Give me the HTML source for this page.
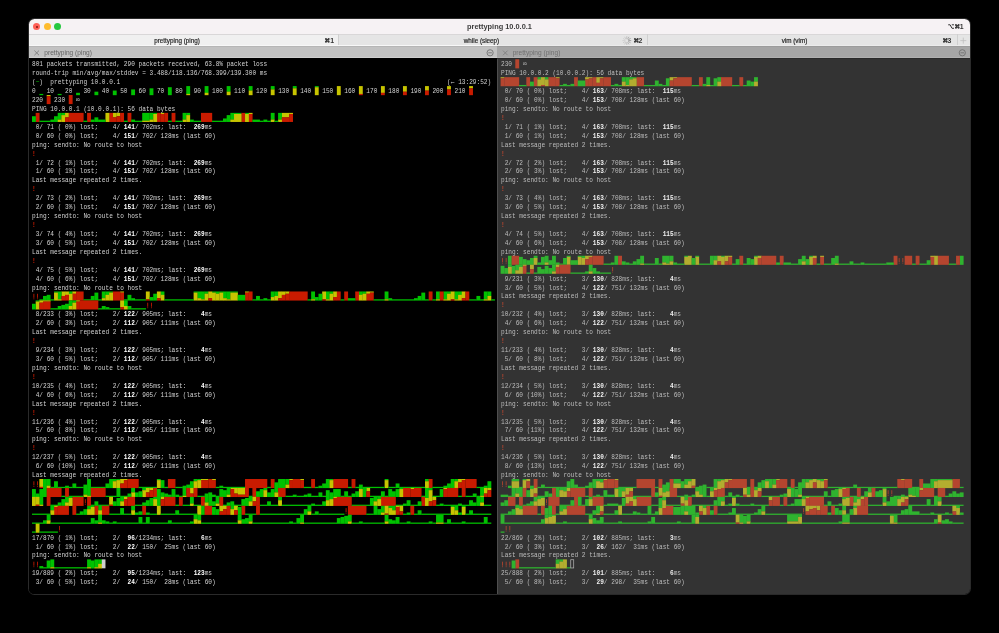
<!DOCTYPE html>
<html><head><meta charset="utf-8"><style>
html,body{margin:0;padding:0;background:#000;}
body{width:999px;height:633px;overflow:hidden;position:relative;}
#win{position:absolute;left:29px;top:19px;width:941px;height:575px;border-radius:5px;overflow:hidden;background:#000;box-shadow:0 0 0 0.6px #4a4a4a;}
.abs{position:absolute;}
.ui{font-family:"Liberation Sans",sans-serif;}
.term{position:absolute;top:0;font-family:"Liberation Mono",monospace;font-size:7px;line-height:8.93px;white-space:pre;will-change:transform;}
.ln{position:absolute;left:0;height:8.93px;transform:scale(0.87452,1.1);transform-origin:0 0;}
.L{color:#d2d2d2;}
.R{color:#bcbcbc;}
.L .b{color:#fff;font-weight:bold;}
.R .b{color:#f0f0f0;font-weight:bold;}
.L .r{color:#c91b00;font-weight:bold;}
.R .r{color:#b5452f;font-weight:bold;}
.L .g{color:#00c200;}
.R .g{color:#2fb32f;}
</style></head><body>
<div id="wrap" style="position:absolute;left:0;top:0;width:999px;height:633px;will-change:transform"><div class="abs" style="left:29px;top:19px;width:941px;height:575px;border-radius:5.5px;background:#000;box-shadow:0 0 0 1px #2a2a2a"></div><div class="abs" style="left:29px;top:58px;width:468px;height:536px;background:#000;border-radius:0 0 0 5px"></div><div class="abs" style="left:497px;top:58px;width:473px;height:536px;background:#333333;border-radius:0 0 5px 0"></div><div class="abs" style="left:496.6px;top:46.2px;width:1.4px;height:547.8px;background:#4e4e4e"></div><div class="abs" style="left:29px;top:19px;width:941px;height:15px;background:#f6f2f4;border-radius:5.5px 5.5px 0 0"></div><div class="abs ui" style="left:29px;top:23.0px;width:941px;text-align:center;font-size:7.4px;line-height:8px;font-weight:bold;color:#3c3c3c">prettyping 10.0.0.1</div><div class="abs" style="left:33.10px;top:23.3px;width:7px;height:7px;border-radius:50%;background:#fe5f57"></div><div class="abs" style="left:43.70px;top:23.3px;width:7px;height:7px;border-radius:50%;background:#febc2e"></div><div class="abs" style="left:54.20px;top:23.3px;width:7px;height:7px;border-radius:50%;background:#28c840"></div><div class="abs" style="left:35.6px;top:25.9px;width:2px;height:2px;border-radius:50%;background:#7a120c"></div><div class="abs" style="left:29px;top:33.8px;width:941px;height:12.4px;background:#e5e5e5"></div><div class="abs" style="left:29px;top:33.8px;width:941px;height:0.8px;background:#d9d7d8"></div><div class="abs" style="left:29px;top:34.6px;width:309px;height:11.6px;background:#f0f0f0"></div><div class="abs" style="left:337.6px;top:34.4px;width:0.9px;height:11.8px;background:#d0d0d0"></div><div class="abs" style="left:647.0px;top:34.4px;width:0.9px;height:11.8px;background:#d0d0d0"></div><div class="abs" style="left:957.2px;top:34.4px;width:0.9px;height:11.8px;background:#d0d0d0"></div><div class="abs ui" style="left:29px;top:37.3px;width:296px;text-align:center;font-size:6.3px;line-height:7px;color:#262626;-webkit-text-stroke:0.18px #262626">prettyping (ping)</div><div class="abs ui" style="left:338px;top:37.3px;width:287px;text-align:center;font-size:6.3px;line-height:7px;color:#262626;-webkit-text-stroke:0.18px #262626">while (sleep)</div><div class="abs ui" style="left:647px;top:37.3px;width:295px;text-align:center;font-size:6.3px;line-height:7px;color:#262626;-webkit-text-stroke:0.18px #262626">vim (vim)</div><svg class="abs" style="left:325.20px;top:38.40px;overflow:visible" width="4.60" height="4.60" viewBox="0 0 10 10"><path d="M3.2 3.2H6.8V6.8H3.2Z M3.2 3.2V2.1A1.1 1.1 0 1 0 2.1 3.2H3.2 M6.8 3.2V2.1A1.1 1.1 0 1 1 7.9 3.2H6.8 M6.8 6.8H7.9A1.1 1.1 0 1 1 6.8 7.9V6.8 M3.2 6.8V7.9A1.1 1.1 0 1 1 2.1 6.8H3.2" fill="none" stroke="#3a3a3a" stroke-width="2.3"/></svg><div class="abs ui" style="left:330.20px;top:37.50px;font-size:6.9px;line-height:6px;font-weight:bold;color:#333">1</div><svg class="abs" style="left:633.60px;top:38.40px;overflow:visible" width="4.60" height="4.60" viewBox="0 0 10 10"><path d="M3.2 3.2H6.8V6.8H3.2Z M3.2 3.2V2.1A1.1 1.1 0 1 0 2.1 3.2H3.2 M6.8 3.2V2.1A1.1 1.1 0 1 1 7.9 3.2H6.8 M6.8 6.8H7.9A1.1 1.1 0 1 1 6.8 7.9V6.8 M3.2 6.8V7.9A1.1 1.1 0 1 1 2.1 6.8H3.2" fill="none" stroke="#3a3a3a" stroke-width="2.3"/></svg><div class="abs ui" style="left:638.60px;top:37.50px;font-size:6.9px;line-height:6px;font-weight:bold;color:#333">2</div><svg class="abs" style="left:942.60px;top:38.40px;overflow:visible" width="4.60" height="4.60" viewBox="0 0 10 10"><path d="M3.2 3.2H6.8V6.8H3.2Z M3.2 3.2V2.1A1.1 1.1 0 1 0 2.1 3.2H3.2 M6.8 3.2V2.1A1.1 1.1 0 1 1 7.9 3.2H6.8 M6.8 6.8H7.9A1.1 1.1 0 1 1 6.8 7.9V6.8 M3.2 6.8V7.9A1.1 1.1 0 1 1 2.1 6.8H3.2" fill="none" stroke="#3a3a3a" stroke-width="2.3"/></svg><div class="abs ui" style="left:947.60px;top:37.50px;font-size:6.9px;line-height:6px;font-weight:bold;color:#333">3</div><svg class="abs" style="left:947.80px;top:23.90px;overflow:visible" width="6.2" height="5" viewBox="0 0 12.4 10"><path d="M0.4 1.6H4.2L8 8.6H12 M7.6 1.6H12" fill="none" stroke="#333" stroke-width="2.0"/></svg><svg class="abs" style="left:954.80px;top:23.90px;overflow:visible" width="4.60" height="4.60" viewBox="0 0 10 10"><path d="M3.2 3.2H6.8V6.8H3.2Z M3.2 3.2V2.1A1.1 1.1 0 1 0 2.1 3.2H3.2 M6.8 3.2V2.1A1.1 1.1 0 1 1 7.9 3.2H6.8 M6.8 6.8H7.9A1.1 1.1 0 1 1 6.8 7.9V6.8 M3.2 6.8V7.9A1.1 1.1 0 1 1 2.1 6.8H3.2" fill="none" stroke="#3a3a3a" stroke-width="2.3"/></svg><div class="abs ui" style="left:959.80px;top:24.00px;font-size:6.9px;line-height:6px;font-weight:bold;color:#333">1</div><svg class="abs" style="left:0;top:0" width="999" height="633"><line x1="628.70" y1="40.60" x2="630.80" y2="40.60" stroke="#9a9a9a" stroke-width="0.9" stroke-linecap="round"/><line x1="628.45" y1="41.55" x2="630.26" y2="42.60" stroke="#a8a8a8" stroke-width="0.9" stroke-linecap="round"/><line x1="627.75" y1="42.25" x2="628.80" y2="44.06" stroke="#b4b4b4" stroke-width="0.9" stroke-linecap="round"/><line x1="626.80" y1="42.50" x2="626.80" y2="44.60" stroke="#c0c0c0" stroke-width="0.9" stroke-linecap="round"/><line x1="625.85" y1="42.25" x2="624.80" y2="44.06" stroke="#c8c8c8" stroke-width="0.9" stroke-linecap="round"/><line x1="625.15" y1="41.55" x2="623.34" y2="42.60" stroke="#cccccc" stroke-width="0.9" stroke-linecap="round"/><line x1="624.90" y1="40.60" x2="622.80" y2="40.60" stroke="#d0d0d0" stroke-width="0.9" stroke-linecap="round"/><line x1="625.15" y1="39.65" x2="623.34" y2="38.60" stroke="#d0d0d0" stroke-width="0.9" stroke-linecap="round"/><line x1="625.85" y1="38.95" x2="624.80" y2="37.14" stroke="#c8c8c8" stroke-width="0.9" stroke-linecap="round"/><line x1="626.80" y1="38.70" x2="626.80" y2="36.60" stroke="#bcbcbc" stroke-width="0.9" stroke-linecap="round"/><line x1="627.75" y1="38.95" x2="628.80" y2="37.14" stroke="#acacac" stroke-width="0.9" stroke-linecap="round"/><line x1="628.45" y1="39.65" x2="630.26" y2="38.60" stroke="#9c9c9c" stroke-width="0.9" stroke-linecap="round"/><path d="M963.3 37.6V43.6 M960.3 40.6H966.3" stroke="#bdbdbd" stroke-width="0.7"/></svg><div class="abs" style="left:29px;top:45.3px;width:468px;height:0.8px;background:#f8f8f8"></div><div class="abs" style="left:497px;top:45.3px;width:473px;height:0.8px;background:#ececec"></div><div class="abs" style="left:29px;top:46.1px;width:468px;height:11.9px;background:#c2c2c2"></div><div class="abs" style="left:497px;top:46.1px;width:473px;height:11.9px;background:#a6a6a6"></div><div class="abs" style="left:29px;top:46.3px;width:468px;height:0.9px;background:#b6b6b6"></div><div class="abs" style="left:497px;top:46.3px;width:473px;height:0.9px;background:#9c9c9c"></div><div class="abs" style="left:29px;top:56.8px;width:468px;height:1.1px;background:#cfcfcf"></div><div class="abs" style="left:497px;top:56.8px;width:473px;height:1.1px;background:#b0b0b0"></div><div class="abs" style="left:497px;top:58px;width:473px;height:0.9px;background:#2a2a2a"></div><div class="abs ui" style="left:44.3px;top:49.2px;font-size:6.6px;line-height:7px;color:#646464">prettyping (ping)</div><div class="abs ui" style="left:512.7px;top:49.2px;font-size:6.6px;line-height:7px;color:#707070">prettyping (ping)</div><svg class="abs" style="left:0;top:0" width="999" height="633"><path d="M34.4 50.6L39 55.2M39 50.6L34.4 55.2" stroke="#707070" stroke-width="0.75"/><path d="M503 50.6L507.6 55.2M507.6 50.6L503 55.2" stroke="#787878" stroke-width="0.75"/><circle cx="490.1" cy="52.8" r="3.1" fill="none" stroke="#6e6e6e" stroke-width="0.85"/><path d="M488.3 52.8H491.9" stroke="#6e6e6e" stroke-width="0.85"/><circle cx="962.3" cy="52.8" r="3.1" fill="none" stroke="#6e6e6e" stroke-width="0.85"/><path d="M960.5 52.8H964.1" stroke="#6e6e6e" stroke-width="0.85"/></svg><div class="term L" style="left:32.00px"><div class="ln" style="top:59.30px">801 packets transmitted, 290 packets received, 63.8% packet loss</div><div class="ln" style="top:68.23px">round-trip min/avg/max/stddev = 3.488/118.136/768.399/139.300 ms</div><div class="ln" style="top:77.16px">(<span class="g">~</span>)  prettyping 10.0.0.1                                                                                         (← 13:29:52)</div><div class="ln" style="top:86.09px">0   10   20   30   40   50   60   70   80   90   100   110   120   130   140   150   160   170   180   190   200   210</div><div class="ln" style="top:95.02px">220   230   ∞</div><div class="ln" style="top:103.95px">PING 10.0.0.1 (10.0.0.1): 56 data bytes</div><div class="ln" style="top:121.81px"> 0/ 71 ( 0%) lost;    4/ <span class="b">141</span>/ 702ms; last:  <span class="b">269</span>ms</div><div class="ln" style="top:130.74px"> 0/ 60 ( 0%) lost;    4/ <span class="b">151</span>/ 702/ 128ms (last 60)</div><div class="ln" style="top:139.67px">ping: sendto: No route to host</div><div class="ln" style="top:148.60px"><span class="r">!</span></div><div class="ln" style="top:157.53px"> 1/ 72 ( 1%) lost;    4/ <span class="b">141</span>/ 702ms; last:  <span class="b">269</span>ms</div><div class="ln" style="top:166.46px"> 1/ 60 ( 1%) lost;    4/ <span class="b">151</span>/ 702/ 128ms (last 60)</div><div class="ln" style="top:175.39px">Last message repeated 2 times.</div><div class="ln" style="top:184.32px"><span class="r">!</span></div><div class="ln" style="top:193.25px"> 2/ 73 ( 2%) lost;    4/ <span class="b">141</span>/ 702ms; last:  <span class="b">269</span>ms</div><div class="ln" style="top:202.18px"> 2/ 60 ( 3%) lost;    4/ <span class="b">151</span>/ 702/ 128ms (last 60)</div><div class="ln" style="top:211.11px">ping: sendto: No route to host</div><div class="ln" style="top:220.04px"><span class="r">!</span></div><div class="ln" style="top:228.97px"> 3/ 74 ( 4%) lost;    4/ <span class="b">141</span>/ 702ms; last:  <span class="b">269</span>ms</div><div class="ln" style="top:237.90px"> 3/ 60 ( 5%) lost;    4/ <span class="b">151</span>/ 702/ 128ms (last 60)</div><div class="ln" style="top:246.83px">Last message repeated 2 times.</div><div class="ln" style="top:255.76px"><span class="r">!</span></div><div class="ln" style="top:264.69px"> 4/ 75 ( 5%) lost;    4/ <span class="b">141</span>/ 702ms; last:  <span class="b">269</span>ms</div><div class="ln" style="top:273.62px"> 4/ 60 ( 6%) lost;    4/ <span class="b">151</span>/ 702/ 128ms (last 60)</div><div class="ln" style="top:282.55px">ping: sendto: No route to host</div><div class="ln" style="top:309.34px"> 8/233 ( 3%) lost;    2/ <span class="b">122</span>/ 905ms; last:    <span class="b">4</span>ms</div><div class="ln" style="top:318.27px"> 2/ 60 ( 3%) lost;    2/ <span class="b">112</span>/ 905/ 111ms (last 60)</div><div class="ln" style="top:327.20px">Last message repeated 2 times.</div><div class="ln" style="top:336.13px"><span class="r">!</span></div><div class="ln" style="top:345.06px"> 9/234 ( 3%) lost;    2/ <span class="b">122</span>/ 905ms; last:    <span class="b">4</span>ms</div><div class="ln" style="top:353.99px"> 3/ 60 ( 5%) lost;    2/ <span class="b">112</span>/ 905/ 111ms (last 60)</div><div class="ln" style="top:362.92px">ping: sendto: No route to host</div><div class="ln" style="top:371.85px"><span class="r">!</span></div><div class="ln" style="top:380.78px">10/235 ( 4%) lost;    2/ <span class="b">122</span>/ 905ms; last:    <span class="b">4</span>ms</div><div class="ln" style="top:389.71px"> 4/ 60 ( 6%) lost;    2/ <span class="b">112</span>/ 905/ 111ms (last 60)</div><div class="ln" style="top:398.64px">Last message repeated 2 times.</div><div class="ln" style="top:407.57px"><span class="r">!</span></div><div class="ln" style="top:416.50px">11/236 ( 4%) lost;    2/ <span class="b">122</span>/ 905ms; last:    <span class="b">4</span>ms</div><div class="ln" style="top:425.43px"> 5/ 60 ( 8%) lost;    2/ <span class="b">112</span>/ 905/ 111ms (last 60)</div><div class="ln" style="top:434.36px">ping: sendto: No route to host</div><div class="ln" style="top:443.29px"><span class="r">!</span></div><div class="ln" style="top:452.22px">12/237 ( 5%) lost;    2/ <span class="b">122</span>/ 905ms; last:    <span class="b">4</span>ms</div><div class="ln" style="top:461.15px"> 6/ 60 (10%) lost;    2/ <span class="b">112</span>/ 905/ 111ms (last 60)</div><div class="ln" style="top:470.08px">Last message repeated 2 times.</div><div class="ln" style="top:532.59px">17/870 ( 1%) lost;    2/  <span class="b">96</span>/1234ms; last:    <span class="b">6</span>ms</div><div class="ln" style="top:541.52px"> 1/ 60 ( 1%) lost;    2/  <span class="b">22</span>/ 150/  25ms (last 60)</div><div class="ln" style="top:550.45px">ping: sendto: No route to host</div><div class="ln" style="top:568.31px">19/889 ( 2%) lost;    2/  <span class="b">95</span>/1234ms; last:  <span class="b">123</span>ms</div><div class="ln" style="top:577.24px"> 3/ 60 ( 5%) lost;    2/  <span class="b">24</span>/ 150/  28ms (last 60)</div></div><div class="term R" style="left:500.60px"><div class="ln" style="top:59.30px">230   ∞</div><div class="ln" style="top:68.23px">PING 10.0.0.2 (10.0.0.2): 56 data bytes</div><div class="ln" style="top:86.09px"> 0/ 70 ( 0%) lost;    4/ <span class="b">163</span>/ 708ms; last:  <span class="b">115</span>ms</div><div class="ln" style="top:95.02px"> 0/ 60 ( 0%) lost;    4/ <span class="b">153</span>/ 708/ 128ms (last 60)</div><div class="ln" style="top:103.95px">ping: sendto: No route to host</div><div class="ln" style="top:112.88px"><span class="r">!</span></div><div class="ln" style="top:121.81px"> 1/ 71 ( 1%) lost;    4/ <span class="b">163</span>/ 708ms; last:  <span class="b">115</span>ms</div><div class="ln" style="top:130.74px"> 1/ 60 ( 1%) lost;    4/ <span class="b">153</span>/ 708/ 128ms (last 60)</div><div class="ln" style="top:139.67px">Last message repeated 2 times.</div><div class="ln" style="top:148.60px"><span class="r">!</span></div><div class="ln" style="top:157.53px"> 2/ 72 ( 2%) lost;    4/ <span class="b">163</span>/ 708ms; last:  <span class="b">115</span>ms</div><div class="ln" style="top:166.46px"> 2/ 60 ( 3%) lost;    4/ <span class="b">153</span>/ 708/ 128ms (last 60)</div><div class="ln" style="top:175.39px">ping: sendto: No route to host</div><div class="ln" style="top:184.32px"><span class="r">!</span></div><div class="ln" style="top:193.25px"> 3/ 73 ( 4%) lost;    4/ <span class="b">163</span>/ 708ms; last:  <span class="b">115</span>ms</div><div class="ln" style="top:202.18px"> 3/ 60 ( 5%) lost;    4/ <span class="b">153</span>/ 708/ 128ms (last 60)</div><div class="ln" style="top:211.11px">Last message repeated 2 times.</div><div class="ln" style="top:220.04px"><span class="r">!</span></div><div class="ln" style="top:228.97px"> 4/ 74 ( 5%) lost;    4/ <span class="b">163</span>/ 708ms; last:  <span class="b">115</span>ms</div><div class="ln" style="top:237.90px"> 4/ 60 ( 6%) lost;    4/ <span class="b">153</span>/ 708/ 128ms (last 60)</div><div class="ln" style="top:246.83px">ping: sendto: No route to host</div><div class="ln" style="top:273.62px"> 9/231 ( 3%) lost;    3/ <span class="b">130</span>/ 828ms; last:    <span class="b">4</span>ms</div><div class="ln" style="top:282.55px"> 3/ 60 ( 5%) lost;    4/ <span class="b">122</span>/ 751/ 132ms (last 60)</div><div class="ln" style="top:291.48px">Last message repeated 2 times.</div><div class="ln" style="top:300.41px"><span class="r">!</span></div><div class="ln" style="top:309.34px">10/232 ( 4%) lost;    3/ <span class="b">130</span>/ 828ms; last:    <span class="b">4</span>ms</div><div class="ln" style="top:318.27px"> 4/ 60 ( 6%) lost;    4/ <span class="b">122</span>/ 751/ 132ms (last 60)</div><div class="ln" style="top:327.20px">ping: sendto: No route to host</div><div class="ln" style="top:336.13px"><span class="r">!</span></div><div class="ln" style="top:345.06px">11/233 ( 4%) lost;    3/ <span class="b">130</span>/ 828ms; last:    <span class="b">4</span>ms</div><div class="ln" style="top:353.99px"> 5/ 60 ( 8%) lost;    4/ <span class="b">122</span>/ 751/ 132ms (last 60)</div><div class="ln" style="top:362.92px">Last message repeated 2 times.</div><div class="ln" style="top:371.85px"><span class="r">!</span></div><div class="ln" style="top:380.78px">12/234 ( 5%) lost;    3/ <span class="b">130</span>/ 828ms; last:    <span class="b">4</span>ms</div><div class="ln" style="top:389.71px"> 6/ 60 (10%) lost;    4/ <span class="b">122</span>/ 751/ 132ms (last 60)</div><div class="ln" style="top:398.64px">ping: sendto: No route to host</div><div class="ln" style="top:407.57px"><span class="r">!</span></div><div class="ln" style="top:416.50px">13/235 ( 5%) lost;    3/ <span class="b">130</span>/ 828ms; last:    <span class="b">4</span>ms</div><div class="ln" style="top:425.43px"> 7/ 60 (11%) lost;    4/ <span class="b">122</span>/ 751/ 132ms (last 60)</div><div class="ln" style="top:434.36px">Last message repeated 2 times.</div><div class="ln" style="top:443.29px"><span class="r">!</span></div><div class="ln" style="top:452.22px">14/236 ( 5%) lost;    3/ <span class="b">130</span>/ 828ms; last:    <span class="b">4</span>ms</div><div class="ln" style="top:461.15px"> 8/ 60 (13%) lost;    4/ <span class="b">122</span>/ 751/ 132ms (last 60)</div><div class="ln" style="top:470.08px">ping: sendto: No route to host</div><div class="ln" style="top:532.59px">22/869 ( 2%) lost;    2/ <span class="b">102</span>/ 885ms; last:    <span class="b">3</span>ms</div><div class="ln" style="top:541.52px"> 2/ 60 ( 3%) lost;    3/  <span class="b">26</span>/ 162/  31ms (last 60)</div><div class="ln" style="top:550.45px">Last message repeated 2 times.</div><div class="ln" style="top:568.31px">25/888 ( 2%) lost;    2/ <span class="b">101</span>/ 885ms; last:    <span class="b">6</span>ms</div><div class="ln" style="top:577.24px"> 5/ 60 ( 8%) lost;    3/  <span class="b">29</span>/ 298/  35ms (last 60)</div></div><svg class="abs" style="left:0;top:0" width="999" height="633"><rect x="314.82" y="86.09" width="3.87" height="1.27" fill="#00c200"/><rect x="292.78" y="86.09" width="3.87" height="2.38" fill="#00c200"/><rect x="469.09" y="86.09" width="3.87" height="2.38" fill="#c7c400"/><rect x="270.75" y="86.09" width="3.87" height="3.50" fill="#00c200"/><rect x="447.05" y="86.09" width="3.87" height="3.50" fill="#c7c400"/><rect x="248.71" y="86.09" width="3.87" height="4.62" fill="#00c200"/><rect x="425.01" y="86.09" width="3.87" height="4.62" fill="#c7c400"/><rect x="226.67" y="86.09" width="3.87" height="5.73" fill="#00c200"/><rect x="402.97" y="86.09" width="3.87" height="5.73" fill="#c7c400"/><rect x="204.63" y="86.09" width="3.87" height="6.85" fill="#00c200"/><rect x="380.94" y="86.09" width="3.87" height="6.85" fill="#c7c400"/><rect x="186.27" y="86.09" width="3.87" height="7.96" fill="#00c200"/><rect x="358.90" y="86.09" width="3.87" height="7.96" fill="#c7c400"/><rect x="336.86" y="86.09" width="3.87" height="9.08" fill="#c7c400"/><rect x="167.90" y="87.21" width="3.87" height="7.96" fill="#00c200"/><rect x="314.82" y="87.21" width="3.87" height="7.96" fill="#c7c400"/><rect x="149.54" y="88.32" width="3.87" height="6.85" fill="#00c200"/><rect x="469.09" y="88.32" width="3.87" height="6.85" fill="#c91b00"/><rect x="292.78" y="88.32" width="3.87" height="6.85" fill="#c7c400"/><rect x="131.17" y="89.44" width="3.87" height="5.73" fill="#00c200"/><rect x="447.05" y="89.44" width="3.87" height="5.73" fill="#c91b00"/><rect x="270.75" y="89.44" width="3.87" height="5.73" fill="#c7c400"/><rect x="112.81" y="90.56" width="3.87" height="4.62" fill="#00c200"/><rect x="425.01" y="90.56" width="3.87" height="4.62" fill="#c91b00"/><rect x="248.71" y="90.56" width="3.87" height="4.62" fill="#c7c400"/><rect x="94.44" y="91.67" width="3.87" height="3.50" fill="#00c200"/><rect x="402.97" y="91.67" width="3.87" height="3.50" fill="#c91b00"/><rect x="226.67" y="91.67" width="3.87" height="3.50" fill="#c7c400"/><rect x="76.08" y="92.79" width="3.87" height="2.38" fill="#00c200"/><rect x="380.94" y="92.79" width="3.87" height="2.38" fill="#c91b00"/><rect x="204.63" y="92.79" width="3.87" height="2.38" fill="#c7c400"/><rect x="39.35" y="93.90" width="3.87" height="1.27" fill="#00c200"/><rect x="57.71" y="93.90" width="3.87" height="1.27" fill="#00c200"/><rect x="358.90" y="93.90" width="3.87" height="1.27" fill="#c91b00"/><rect x="186.27" y="93.90" width="3.87" height="1.27" fill="#c7c400"/><rect x="46.69" y="95.02" width="3.87" height="1.27" fill="#c7c400"/><rect x="68.73" y="95.02" width="3.87" height="9.08" fill="#c91b00"/><rect x="46.69" y="96.14" width="3.87" height="7.96" fill="#c91b00"/><rect x="153.21" y="112.88" width="3.87" height="1.27" fill="#00c200"/><rect x="234.02" y="112.88" width="7.55" height="1.27" fill="#00c200"/><rect x="245.03" y="112.88" width="3.87" height="1.27" fill="#00c200"/><rect x="160.56" y="112.88" width="3.87" height="1.27" fill="#c7c400"/><rect x="248.71" y="112.88" width="3.87" height="1.27" fill="#c7c400"/><rect x="289.11" y="112.88" width="3.87" height="1.27" fill="#c7c400"/><rect x="61.38" y="112.88" width="3.87" height="2.38" fill="#00c200"/><rect x="186.27" y="112.88" width="3.87" height="2.38" fill="#00c200"/><rect x="116.48" y="112.88" width="3.87" height="3.50" fill="#c7c400"/><rect x="65.06" y="112.88" width="3.87" height="4.62" fill="#c7c400"/><rect x="112.81" y="112.88" width="3.87" height="4.62" fill="#c7c400"/><rect x="281.76" y="112.88" width="7.55" height="4.62" fill="#c7c400"/><rect x="57.71" y="112.88" width="3.87" height="6.85" fill="#00c200"/><rect x="149.54" y="112.88" width="3.87" height="6.85" fill="#00c200"/><rect x="182.59" y="112.88" width="3.87" height="6.85" fill="#00c200"/><rect x="230.34" y="112.88" width="3.87" height="6.85" fill="#00c200"/><rect x="270.75" y="112.88" width="3.87" height="6.85" fill="#00c200"/><rect x="278.09" y="112.88" width="3.87" height="6.85" fill="#00c200"/><rect x="142.19" y="112.88" width="7.55" height="7.96" fill="#00c200"/><rect x="35.67" y="112.88" width="3.87" height="9.08" fill="#c91b00"/><rect x="68.73" y="112.88" width="14.89" height="9.08" fill="#c91b00"/><rect x="87.09" y="112.88" width="3.87" height="9.08" fill="#c91b00"/><rect x="109.13" y="112.88" width="3.87" height="9.08" fill="#c91b00"/><rect x="120.15" y="112.88" width="3.87" height="9.08" fill="#c91b00"/><rect x="127.50" y="112.88" width="3.87" height="9.08" fill="#c91b00"/><rect x="156.88" y="112.88" width="3.87" height="9.08" fill="#c91b00"/><rect x="164.23" y="112.88" width="3.87" height="9.08" fill="#c91b00"/><rect x="171.57" y="112.88" width="3.87" height="9.08" fill="#c91b00"/><rect x="200.96" y="112.88" width="11.22" height="9.08" fill="#c91b00"/><rect x="241.36" y="112.88" width="3.87" height="9.08" fill="#c91b00"/><rect x="105.46" y="112.88" width="3.87" height="9.08" fill="#c7c400"/><rect x="160.56" y="114.00" width="3.87" height="7.96" fill="#c91b00"/><rect x="248.71" y="114.00" width="3.87" height="7.96" fill="#c91b00"/><rect x="289.11" y="114.00" width="3.87" height="7.96" fill="#c91b00"/><rect x="153.21" y="114.00" width="3.87" height="7.96" fill="#c7c400"/><rect x="234.02" y="114.00" width="7.55" height="7.96" fill="#c7c400"/><rect x="245.03" y="114.00" width="3.87" height="7.96" fill="#c7c400"/><rect x="226.67" y="115.11" width="3.87" height="6.85" fill="#00c200"/><rect x="61.38" y="115.11" width="3.87" height="6.85" fill="#c7c400"/><rect x="186.27" y="115.11" width="3.87" height="6.85" fill="#c7c400"/><rect x="32.00" y="116.23" width="3.87" height="5.73" fill="#00c200"/><rect x="54.04" y="116.23" width="3.87" height="5.73" fill="#00c200"/><rect x="116.48" y="116.23" width="3.87" height="5.73" fill="#c91b00"/><rect x="94.44" y="117.34" width="3.87" height="4.62" fill="#00c200"/><rect x="65.06" y="117.34" width="3.87" height="4.62" fill="#c91b00"/><rect x="112.81" y="117.34" width="3.87" height="4.62" fill="#c91b00"/><rect x="281.76" y="117.34" width="7.55" height="4.62" fill="#c91b00"/><rect x="223.00" y="118.46" width="3.87" height="3.50" fill="#00c200"/><rect x="50.37" y="119.58" width="3.87" height="2.38" fill="#00c200"/><rect x="90.77" y="119.58" width="3.87" height="2.38" fill="#00c200"/><rect x="98.11" y="119.58" width="7.55" height="2.38" fill="#00c200"/><rect x="131.17" y="119.58" width="3.87" height="2.38" fill="#00c200"/><rect x="189.94" y="119.58" width="3.87" height="2.38" fill="#00c200"/><rect x="252.38" y="119.58" width="7.55" height="2.38" fill="#00c200"/><rect x="263.40" y="119.58" width="3.87" height="2.38" fill="#00c200"/><rect x="57.71" y="119.58" width="3.87" height="2.38" fill="#c7c400"/><rect x="149.54" y="119.58" width="3.87" height="2.38" fill="#c7c400"/><rect x="182.59" y="119.58" width="3.87" height="2.38" fill="#c7c400"/><rect x="230.34" y="119.58" width="3.87" height="2.38" fill="#c7c400"/><rect x="270.75" y="119.58" width="3.87" height="2.38" fill="#c7c400"/><rect x="278.09" y="119.58" width="3.87" height="2.38" fill="#c7c400"/><rect x="39.35" y="120.69" width="11.22" height="1.27" fill="#00c200"/><rect x="83.42" y="120.69" width="3.87" height="1.27" fill="#00c200"/><rect x="123.83" y="120.69" width="3.87" height="1.27" fill="#00c200"/><rect x="134.84" y="120.69" width="7.55" height="1.27" fill="#00c200"/><rect x="167.90" y="120.69" width="3.87" height="1.27" fill="#00c200"/><rect x="175.25" y="120.69" width="7.55" height="1.27" fill="#00c200"/><rect x="193.61" y="120.69" width="7.55" height="1.27" fill="#00c200"/><rect x="211.98" y="120.69" width="11.22" height="1.27" fill="#00c200"/><rect x="259.73" y="120.69" width="3.87" height="1.27" fill="#00c200"/><rect x="267.07" y="120.69" width="3.87" height="1.27" fill="#00c200"/><rect x="274.42" y="120.69" width="3.87" height="1.27" fill="#00c200"/><rect x="142.19" y="120.69" width="7.55" height="1.27" fill="#c7c400"/><rect x="54.04" y="291.48" width="3.87" height="1.27" fill="#00c200"/><rect x="109.13" y="291.48" width="3.87" height="1.27" fill="#00c200"/><rect x="193.61" y="291.48" width="3.87" height="1.27" fill="#00c200"/><rect x="211.98" y="291.48" width="3.87" height="1.27" fill="#00c200"/><rect x="219.32" y="291.48" width="3.87" height="1.27" fill="#00c200"/><rect x="230.34" y="291.48" width="7.55" height="1.27" fill="#00c200"/><rect x="120.15" y="291.48" width="3.87" height="1.27" fill="#c7c400"/><rect x="245.03" y="291.48" width="3.87" height="1.27" fill="#c7c400"/><rect x="369.92" y="291.48" width="3.87" height="1.27" fill="#c7c400"/><rect x="68.73" y="291.48" width="3.87" height="2.38" fill="#00c200"/><rect x="204.63" y="291.48" width="3.87" height="2.38" fill="#00c200"/><rect x="215.65" y="291.48" width="3.87" height="2.38" fill="#00c200"/><rect x="329.51" y="291.48" width="3.87" height="2.38" fill="#00c200"/><rect x="362.57" y="291.48" width="3.87" height="2.38" fill="#00c200"/><rect x="447.05" y="291.48" width="3.87" height="2.38" fill="#00c200"/><rect x="72.40" y="291.48" width="3.87" height="2.38" fill="#c7c400"/><rect x="285.44" y="291.48" width="3.87" height="2.38" fill="#c7c400"/><rect x="366.24" y="291.48" width="3.87" height="2.38" fill="#c7c400"/><rect x="105.46" y="291.48" width="3.87" height="3.50" fill="#00c200"/><rect x="160.56" y="291.48" width="3.87" height="3.50" fill="#00c200"/><rect x="358.90" y="291.48" width="3.87" height="3.50" fill="#00c200"/><rect x="458.07" y="291.48" width="3.87" height="3.50" fill="#00c200"/><rect x="65.06" y="291.48" width="3.87" height="3.50" fill="#c7c400"/><rect x="281.76" y="291.48" width="3.87" height="3.50" fill="#c7c400"/><rect x="274.42" y="291.48" width="3.87" height="4.62" fill="#00c200"/><rect x="487.45" y="291.48" width="3.87" height="4.62" fill="#00c200"/><rect x="61.38" y="291.48" width="3.87" height="4.62" fill="#c7c400"/><rect x="270.75" y="291.48" width="3.87" height="5.73" fill="#00c200"/><rect x="333.19" y="291.48" width="3.87" height="5.73" fill="#c7c400"/><rect x="101.79" y="291.48" width="3.87" height="6.85" fill="#00c200"/><rect x="197.28" y="291.48" width="3.87" height="6.85" fill="#00c200"/><rect x="223.00" y="291.48" width="3.87" height="6.85" fill="#00c200"/><rect x="156.88" y="291.48" width="3.87" height="6.85" fill="#c7c400"/><rect x="208.30" y="291.48" width="3.87" height="6.85" fill="#c7c400"/><rect x="278.09" y="291.48" width="3.87" height="6.85" fill="#c7c400"/><rect x="461.74" y="291.48" width="3.87" height="6.85" fill="#c7c400"/><rect x="57.71" y="291.48" width="3.87" height="7.96" fill="#00c200"/><rect x="200.96" y="291.48" width="3.87" height="7.96" fill="#00c200"/><rect x="226.67" y="291.48" width="3.87" height="7.96" fill="#00c200"/><rect x="311.15" y="291.48" width="3.87" height="7.96" fill="#00c200"/><rect x="325.84" y="291.48" width="3.87" height="7.96" fill="#00c200"/><rect x="384.61" y="291.48" width="3.87" height="7.96" fill="#00c200"/><rect x="436.03" y="291.48" width="3.87" height="7.96" fill="#00c200"/><rect x="443.38" y="291.48" width="3.87" height="7.96" fill="#00c200"/><rect x="454.39" y="291.48" width="3.87" height="7.96" fill="#00c200"/><rect x="483.78" y="291.48" width="3.87" height="7.96" fill="#00c200"/><rect x="145.86" y="291.48" width="3.87" height="7.96" fill="#c7c400"/><rect x="322.17" y="291.48" width="3.87" height="7.96" fill="#c7c400"/><rect x="450.72" y="291.48" width="3.87" height="7.96" fill="#c7c400"/><rect x="76.08" y="291.48" width="7.55" height="9.08" fill="#c91b00"/><rect x="112.81" y="291.48" width="7.55" height="9.08" fill="#c91b00"/><rect x="248.71" y="291.48" width="3.87" height="9.08" fill="#c91b00"/><rect x="289.11" y="291.48" width="18.57" height="9.08" fill="#c91b00"/><rect x="336.86" y="291.48" width="3.87" height="9.08" fill="#c91b00"/><rect x="344.20" y="291.48" width="3.87" height="9.08" fill="#c91b00"/><rect x="355.22" y="291.48" width="3.87" height="9.08" fill="#c91b00"/><rect x="428.68" y="291.48" width="3.87" height="9.08" fill="#c91b00"/><rect x="439.70" y="291.48" width="3.87" height="9.08" fill="#c91b00"/><rect x="465.41" y="291.48" width="3.87" height="9.08" fill="#c91b00"/><rect x="94.44" y="292.60" width="3.87" height="7.96" fill="#00c200"/><rect x="421.34" y="292.60" width="3.87" height="7.96" fill="#00c200"/><rect x="120.15" y="292.60" width="3.87" height="7.96" fill="#c91b00"/><rect x="245.03" y="292.60" width="3.87" height="7.96" fill="#c91b00"/><rect x="369.92" y="292.60" width="3.87" height="7.96" fill="#c91b00"/><rect x="54.04" y="292.60" width="3.87" height="7.96" fill="#c7c400"/><rect x="109.13" y="292.60" width="3.87" height="7.96" fill="#c7c400"/><rect x="193.61" y="292.60" width="3.87" height="7.96" fill="#c7c400"/><rect x="211.98" y="292.60" width="3.87" height="7.96" fill="#c7c400"/><rect x="219.32" y="292.60" width="3.87" height="7.96" fill="#c7c400"/><rect x="230.34" y="292.60" width="7.55" height="7.96" fill="#c7c400"/><rect x="153.21" y="293.71" width="3.87" height="6.85" fill="#00c200"/><rect x="318.49" y="293.71" width="3.87" height="6.85" fill="#00c200"/><rect x="72.40" y="293.71" width="3.87" height="6.85" fill="#c91b00"/><rect x="285.44" y="293.71" width="3.87" height="6.85" fill="#c91b00"/><rect x="366.24" y="293.71" width="3.87" height="6.85" fill="#c91b00"/><rect x="68.73" y="293.71" width="3.87" height="6.85" fill="#c7c400"/><rect x="204.63" y="293.71" width="3.87" height="6.85" fill="#c7c400"/><rect x="215.65" y="293.71" width="3.87" height="6.85" fill="#c7c400"/><rect x="329.51" y="293.71" width="3.87" height="6.85" fill="#c7c400"/><rect x="362.57" y="293.71" width="3.87" height="6.85" fill="#c7c400"/><rect x="447.05" y="293.71" width="3.87" height="6.85" fill="#c7c400"/><rect x="46.69" y="294.83" width="3.87" height="5.73" fill="#00c200"/><rect x="127.50" y="294.83" width="3.87" height="5.73" fill="#00c200"/><rect x="237.69" y="294.83" width="7.55" height="5.73" fill="#00c200"/><rect x="65.06" y="294.83" width="3.87" height="5.73" fill="#c91b00"/><rect x="281.76" y="294.83" width="3.87" height="5.73" fill="#c91b00"/><rect x="105.46" y="294.83" width="3.87" height="5.73" fill="#c7c400"/><rect x="160.56" y="294.83" width="3.87" height="5.73" fill="#c7c400"/><rect x="358.90" y="294.83" width="3.87" height="5.73" fill="#c7c400"/><rect x="458.07" y="294.83" width="3.87" height="5.73" fill="#c7c400"/><rect x="43.02" y="295.94" width="3.87" height="4.62" fill="#00c200"/><rect x="90.77" y="295.94" width="3.87" height="4.62" fill="#00c200"/><rect x="256.05" y="295.94" width="3.87" height="4.62" fill="#00c200"/><rect x="417.67" y="295.94" width="3.87" height="4.62" fill="#00c200"/><rect x="476.43" y="295.94" width="3.87" height="4.62" fill="#00c200"/><rect x="61.38" y="295.94" width="3.87" height="4.62" fill="#c91b00"/><rect x="274.42" y="295.94" width="3.87" height="4.62" fill="#c7c400"/><rect x="487.45" y="295.94" width="3.87" height="4.62" fill="#c7c400"/><rect x="149.54" y="297.06" width="3.87" height="3.50" fill="#00c200"/><rect x="314.82" y="297.06" width="3.87" height="3.50" fill="#00c200"/><rect x="333.19" y="297.06" width="3.87" height="3.50" fill="#c91b00"/><rect x="270.75" y="297.06" width="3.87" height="3.50" fill="#c7c400"/><rect x="131.17" y="298.18" width="3.87" height="2.38" fill="#00c200"/><rect x="263.40" y="298.18" width="3.87" height="2.38" fill="#00c200"/><rect x="347.88" y="298.18" width="7.55" height="2.38" fill="#00c200"/><rect x="388.28" y="298.18" width="3.87" height="2.38" fill="#00c200"/><rect x="413.99" y="298.18" width="3.87" height="2.38" fill="#00c200"/><rect x="156.88" y="298.18" width="3.87" height="2.38" fill="#c91b00"/><rect x="208.30" y="298.18" width="3.87" height="2.38" fill="#c91b00"/><rect x="278.09" y="298.18" width="3.87" height="2.38" fill="#c91b00"/><rect x="461.74" y="298.18" width="3.87" height="2.38" fill="#c91b00"/><rect x="101.79" y="298.18" width="3.87" height="2.38" fill="#c7c400"/><rect x="197.28" y="298.18" width="3.87" height="2.38" fill="#c7c400"/><rect x="223.00" y="298.18" width="3.87" height="2.38" fill="#c7c400"/><rect x="39.35" y="299.29" width="3.87" height="1.27" fill="#00c200"/><rect x="50.37" y="299.29" width="3.87" height="1.27" fill="#00c200"/><rect x="83.42" y="299.29" width="7.55" height="1.27" fill="#00c200"/><rect x="98.11" y="299.29" width="3.87" height="1.27" fill="#00c200"/><rect x="123.83" y="299.29" width="3.87" height="1.27" fill="#00c200"/><rect x="134.84" y="299.29" width="11.22" height="1.27" fill="#00c200"/><rect x="164.23" y="299.29" width="29.58" height="1.27" fill="#00c200"/><rect x="252.38" y="299.29" width="3.87" height="1.27" fill="#00c200"/><rect x="259.73" y="299.29" width="3.87" height="1.27" fill="#00c200"/><rect x="267.07" y="299.29" width="3.87" height="1.27" fill="#00c200"/><rect x="307.48" y="299.29" width="3.87" height="1.27" fill="#00c200"/><rect x="340.53" y="299.29" width="3.87" height="1.27" fill="#00c200"/><rect x="373.59" y="299.29" width="11.22" height="1.27" fill="#00c200"/><rect x="391.95" y="299.29" width="22.24" height="1.27" fill="#00c200"/><rect x="425.01" y="299.29" width="3.87" height="1.27" fill="#00c200"/><rect x="432.36" y="299.29" width="3.87" height="1.27" fill="#00c200"/><rect x="469.09" y="299.29" width="7.55" height="1.27" fill="#00c200"/><rect x="480.11" y="299.29" width="3.87" height="1.27" fill="#00c200"/><rect x="491.12" y="299.29" width="3.87" height="1.27" fill="#00c200"/><rect x="145.86" y="299.29" width="3.87" height="1.27" fill="#c91b00"/><rect x="322.17" y="299.29" width="3.87" height="1.27" fill="#c91b00"/><rect x="450.72" y="299.29" width="3.87" height="1.27" fill="#c91b00"/><rect x="57.71" y="299.29" width="3.87" height="1.27" fill="#c7c400"/><rect x="200.96" y="299.29" width="3.87" height="1.27" fill="#c7c400"/><rect x="226.67" y="299.29" width="3.87" height="1.27" fill="#c7c400"/><rect x="311.15" y="299.29" width="3.87" height="1.27" fill="#c7c400"/><rect x="325.84" y="299.29" width="3.87" height="1.27" fill="#c7c400"/><rect x="384.61" y="299.29" width="3.87" height="1.27" fill="#c7c400"/><rect x="436.03" y="299.29" width="3.87" height="1.27" fill="#c7c400"/><rect x="443.38" y="299.29" width="3.87" height="1.27" fill="#c7c400"/><rect x="454.39" y="299.29" width="3.87" height="1.27" fill="#c7c400"/><rect x="483.78" y="299.29" width="3.87" height="1.27" fill="#c7c400"/><rect x="33.45" y="293.78" width="0.85" height="4.0" fill="#c91b00"/><rect x="33.45" y="298.38" width="0.85" height="0.9" fill="#c91b00"/><rect x="37.12" y="293.78" width="0.85" height="4.0" fill="#c91b00"/><rect x="37.12" y="298.38" width="0.85" height="0.9" fill="#c91b00"/><rect x="35.67" y="300.41" width="3.87" height="1.27" fill="#00c200"/><rect x="43.02" y="300.41" width="7.55" height="1.27" fill="#c7c400"/><rect x="76.08" y="300.41" width="3.87" height="1.27" fill="#c7c400"/><rect x="72.40" y="300.41" width="3.87" height="2.38" fill="#00c200"/><rect x="39.35" y="300.41" width="3.87" height="2.38" fill="#c7c400"/><rect x="68.73" y="300.41" width="3.87" height="5.73" fill="#00c200"/><rect x="123.83" y="300.41" width="3.87" height="5.73" fill="#00c200"/><rect x="120.15" y="300.41" width="3.87" height="6.85" fill="#c7c400"/><rect x="79.75" y="300.41" width="18.57" height="9.08" fill="#c91b00"/><rect x="43.02" y="301.53" width="7.55" height="7.96" fill="#c91b00"/><rect x="76.08" y="301.53" width="3.87" height="7.96" fill="#c91b00"/><rect x="35.67" y="301.53" width="3.87" height="7.96" fill="#c7c400"/><rect x="39.35" y="302.64" width="3.87" height="6.85" fill="#c91b00"/><rect x="72.40" y="302.64" width="3.87" height="6.85" fill="#c7c400"/><rect x="32.00" y="303.76" width="3.87" height="5.73" fill="#00c200"/><rect x="65.06" y="303.76" width="3.87" height="5.73" fill="#00c200"/><rect x="61.38" y="304.87" width="3.87" height="4.62" fill="#00c200"/><rect x="57.71" y="305.99" width="3.87" height="3.50" fill="#00c200"/><rect x="101.79" y="305.99" width="3.87" height="3.50" fill="#00c200"/><rect x="127.50" y="305.99" width="3.87" height="3.50" fill="#00c200"/><rect x="68.73" y="305.99" width="3.87" height="3.50" fill="#c7c400"/><rect x="123.83" y="305.99" width="3.87" height="3.50" fill="#c7c400"/><rect x="105.46" y="307.11" width="3.87" height="2.38" fill="#00c200"/><rect x="120.15" y="307.11" width="3.87" height="2.38" fill="#c91b00"/><rect x="50.37" y="308.22" width="7.55" height="1.27" fill="#00c200"/><rect x="98.11" y="308.22" width="3.87" height="1.27" fill="#00c200"/><rect x="109.13" y="308.22" width="11.22" height="1.27" fill="#00c200"/><rect x="131.17" y="308.22" width="14.89" height="1.27" fill="#00c200"/><rect x="147.31" y="302.71" width="0.85" height="4.0" fill="#c91b00"/><rect x="147.31" y="307.31" width="0.85" height="0.9" fill="#c91b00"/><rect x="150.99" y="302.71" width="0.85" height="4.0" fill="#c91b00"/><rect x="150.99" y="307.31" width="0.85" height="0.9" fill="#c91b00"/><rect x="116.48" y="479.01" width="3.87" height="1.27" fill="#00c200"/><rect x="156.88" y="479.01" width="3.87" height="1.27" fill="#00c200"/><rect x="197.28" y="479.01" width="3.87" height="1.27" fill="#00c200"/><rect x="329.51" y="479.01" width="3.87" height="1.27" fill="#00c200"/><rect x="384.61" y="479.01" width="3.87" height="1.27" fill="#00c200"/><rect x="123.83" y="479.01" width="3.87" height="1.27" fill="#c7c400"/><rect x="200.96" y="479.01" width="7.55" height="1.27" fill="#c7c400"/><rect x="211.98" y="479.01" width="3.87" height="1.27" fill="#c7c400"/><rect x="289.11" y="479.01" width="3.87" height="1.27" fill="#c7c400"/><rect x="300.13" y="479.01" width="3.87" height="1.27" fill="#c7c400"/><rect x="461.74" y="479.01" width="3.87" height="1.27" fill="#c7c400"/><rect x="112.81" y="479.01" width="3.87" height="2.38" fill="#00c200"/><rect x="193.61" y="479.01" width="3.87" height="2.38" fill="#00c200"/><rect x="425.01" y="479.01" width="3.87" height="2.38" fill="#00c200"/><rect x="454.39" y="479.01" width="3.87" height="2.38" fill="#00c200"/><rect x="458.07" y="479.01" width="3.87" height="3.50" fill="#c7c400"/><rect x="120.15" y="479.01" width="3.87" height="4.62" fill="#c7c400"/><rect x="285.44" y="479.01" width="3.87" height="5.73" fill="#00c200"/><rect x="46.69" y="479.01" width="3.87" height="6.85" fill="#00c200"/><rect x="39.35" y="479.01" width="3.87" height="7.96" fill="#c7c400"/><rect x="43.02" y="479.01" width="3.87" height="9.08" fill="#00c200"/><rect x="87.09" y="479.01" width="3.87" height="9.08" fill="#00c200"/><rect x="109.13" y="479.01" width="3.87" height="9.08" fill="#00c200"/><rect x="278.09" y="479.01" width="7.55" height="9.08" fill="#00c200"/><rect x="325.84" y="479.01" width="3.87" height="9.08" fill="#00c200"/><rect x="450.72" y="479.01" width="3.87" height="9.08" fill="#00c200"/><rect x="127.50" y="479.01" width="11.22" height="9.08" fill="#c91b00"/><rect x="167.90" y="479.01" width="7.55" height="9.08" fill="#c91b00"/><rect x="208.30" y="479.01" width="3.87" height="9.08" fill="#c91b00"/><rect x="245.03" y="479.01" width="22.24" height="9.08" fill="#c91b00"/><rect x="270.75" y="479.01" width="3.87" height="9.08" fill="#c91b00"/><rect x="292.78" y="479.01" width="7.55" height="9.08" fill="#c91b00"/><rect x="311.15" y="479.01" width="3.87" height="9.08" fill="#c91b00"/><rect x="333.19" y="479.01" width="14.89" height="9.08" fill="#c91b00"/><rect x="351.55" y="479.01" width="3.87" height="9.08" fill="#c91b00"/><rect x="428.68" y="479.01" width="3.87" height="9.08" fill="#c91b00"/><rect x="465.41" y="479.01" width="11.22" height="9.08" fill="#c91b00"/><rect x="160.56" y="480.13" width="3.87" height="7.96" fill="#00c200"/><rect x="123.83" y="480.13" width="3.87" height="7.96" fill="#c91b00"/><rect x="200.96" y="480.13" width="7.55" height="7.96" fill="#c91b00"/><rect x="211.98" y="480.13" width="3.87" height="7.96" fill="#c91b00"/><rect x="289.11" y="480.13" width="3.87" height="7.96" fill="#c91b00"/><rect x="300.13" y="480.13" width="3.87" height="7.96" fill="#c91b00"/><rect x="461.74" y="480.13" width="3.87" height="7.96" fill="#c91b00"/><rect x="116.48" y="480.13" width="3.87" height="7.96" fill="#c7c400"/><rect x="156.88" y="480.13" width="3.87" height="7.96" fill="#c7c400"/><rect x="197.28" y="480.13" width="3.87" height="7.96" fill="#c7c400"/><rect x="329.51" y="480.13" width="3.87" height="7.96" fill="#c7c400"/><rect x="384.61" y="480.13" width="3.87" height="7.96" fill="#c7c400"/><rect x="54.04" y="481.24" width="3.87" height="6.85" fill="#00c200"/><rect x="189.94" y="481.24" width="3.87" height="6.85" fill="#00c200"/><rect x="487.45" y="481.24" width="3.87" height="6.85" fill="#00c200"/><rect x="112.81" y="481.24" width="3.87" height="6.85" fill="#c7c400"/><rect x="193.61" y="481.24" width="3.87" height="6.85" fill="#c7c400"/><rect x="425.01" y="481.24" width="3.87" height="6.85" fill="#c7c400"/><rect x="454.39" y="481.24" width="3.87" height="6.85" fill="#c7c400"/><rect x="274.42" y="482.36" width="3.87" height="5.73" fill="#00c200"/><rect x="458.07" y="482.36" width="3.87" height="5.73" fill="#c91b00"/><rect x="72.40" y="483.47" width="3.87" height="4.62" fill="#00c200"/><rect x="105.46" y="483.47" width="3.87" height="4.62" fill="#00c200"/><rect x="322.17" y="483.47" width="3.87" height="4.62" fill="#00c200"/><rect x="395.63" y="483.47" width="3.87" height="4.62" fill="#00c200"/><rect x="447.05" y="483.47" width="3.87" height="4.62" fill="#00c200"/><rect x="120.15" y="483.47" width="3.87" height="4.62" fill="#c91b00"/><rect x="83.42" y="484.59" width="3.87" height="3.50" fill="#00c200"/><rect x="186.27" y="484.59" width="3.87" height="3.50" fill="#00c200"/><rect x="358.90" y="484.59" width="3.87" height="3.50" fill="#00c200"/><rect x="285.44" y="484.59" width="3.87" height="3.50" fill="#c7c400"/><rect x="65.06" y="485.71" width="3.87" height="2.38" fill="#00c200"/><rect x="182.59" y="485.71" width="3.87" height="2.38" fill="#00c200"/><rect x="219.32" y="485.71" width="3.87" height="2.38" fill="#00c200"/><rect x="318.49" y="485.71" width="3.87" height="2.38" fill="#00c200"/><rect x="443.38" y="485.71" width="3.87" height="2.38" fill="#00c200"/><rect x="483.78" y="485.71" width="3.87" height="2.38" fill="#00c200"/><rect x="46.69" y="485.71" width="3.87" height="2.38" fill="#c7c400"/><rect x="50.37" y="486.82" width="3.87" height="1.27" fill="#00c200"/><rect x="57.71" y="486.82" width="7.55" height="1.27" fill="#00c200"/><rect x="68.73" y="486.82" width="3.87" height="1.27" fill="#00c200"/><rect x="76.08" y="486.82" width="7.55" height="1.27" fill="#00c200"/><rect x="90.77" y="486.82" width="14.89" height="1.27" fill="#00c200"/><rect x="138.52" y="486.82" width="18.57" height="1.27" fill="#00c200"/><rect x="164.23" y="486.82" width="3.87" height="1.27" fill="#00c200"/><rect x="175.25" y="486.82" width="7.55" height="1.27" fill="#00c200"/><rect x="215.65" y="486.82" width="3.87" height="1.27" fill="#00c200"/><rect x="223.00" y="486.82" width="22.24" height="1.27" fill="#00c200"/><rect x="267.07" y="486.82" width="3.87" height="1.27" fill="#00c200"/><rect x="303.80" y="486.82" width="7.55" height="1.27" fill="#00c200"/><rect x="314.82" y="486.82" width="3.87" height="1.27" fill="#00c200"/><rect x="347.88" y="486.82" width="3.87" height="1.27" fill="#00c200"/><rect x="355.22" y="486.82" width="3.87" height="1.27" fill="#00c200"/><rect x="362.57" y="486.82" width="22.24" height="1.27" fill="#00c200"/><rect x="388.28" y="486.82" width="7.55" height="1.27" fill="#00c200"/><rect x="399.30" y="486.82" width="25.91" height="1.27" fill="#00c200"/><rect x="432.36" y="486.82" width="11.22" height="1.27" fill="#00c200"/><rect x="476.43" y="486.82" width="7.55" height="1.27" fill="#00c200"/><rect x="39.35" y="486.82" width="3.87" height="1.27" fill="#c91b00"/><rect x="33.45" y="481.31" width="0.85" height="4.0" fill="#c91b00"/><rect x="33.45" y="485.91" width="0.85" height="0.9" fill="#c91b00"/><rect x="37.12" y="481.31" width="0.85" height="4.0" fill="#c91b00"/><rect x="37.12" y="485.91" width="0.85" height="0.9" fill="#c91b00"/><rect x="358.90" y="487.94" width="3.87" height="1.27" fill="#00c200"/><rect x="399.30" y="487.94" width="3.87" height="1.27" fill="#00c200"/><rect x="230.34" y="487.94" width="3.87" height="1.27" fill="#c7c400"/><rect x="410.32" y="487.94" width="3.87" height="1.27" fill="#c7c400"/><rect x="443.38" y="487.94" width="3.87" height="1.27" fill="#c7c400"/><rect x="142.19" y="487.94" width="3.87" height="2.38" fill="#00c200"/><rect x="263.40" y="487.94" width="3.87" height="2.38" fill="#00c200"/><rect x="428.68" y="487.94" width="3.87" height="2.38" fill="#00c200"/><rect x="149.54" y="487.94" width="3.87" height="2.38" fill="#c7c400"/><rect x="487.45" y="487.94" width="3.87" height="2.38" fill="#c7c400"/><rect x="366.24" y="487.94" width="3.87" height="3.50" fill="#c7c400"/><rect x="131.17" y="487.94" width="3.87" height="4.62" fill="#00c200"/><rect x="274.42" y="487.94" width="3.87" height="4.62" fill="#00c200"/><rect x="145.86" y="487.94" width="3.87" height="4.62" fill="#c7c400"/><rect x="189.94" y="487.94" width="3.87" height="5.73" fill="#c7c400"/><rect x="234.02" y="487.94" width="3.87" height="5.73" fill="#c7c400"/><rect x="483.78" y="487.94" width="3.87" height="5.73" fill="#c7c400"/><rect x="83.42" y="487.94" width="3.87" height="6.85" fill="#00c200"/><rect x="226.67" y="487.94" width="3.87" height="6.85" fill="#00c200"/><rect x="237.69" y="487.94" width="7.55" height="6.85" fill="#c7c400"/><rect x="87.09" y="487.94" width="3.87" height="7.96" fill="#00c200"/><rect x="182.59" y="487.94" width="3.87" height="7.96" fill="#00c200"/><rect x="480.11" y="487.94" width="3.87" height="7.96" fill="#00c200"/><rect x="43.02" y="487.94" width="3.87" height="9.08" fill="#00c200"/><rect x="116.48" y="487.94" width="3.87" height="9.08" fill="#00c200"/><rect x="362.57" y="487.94" width="3.87" height="9.08" fill="#00c200"/><rect x="425.01" y="487.94" width="3.87" height="9.08" fill="#00c200"/><rect x="46.69" y="487.94" width="14.89" height="9.08" fill="#c91b00"/><rect x="65.06" y="487.94" width="3.87" height="9.08" fill="#c91b00"/><rect x="90.77" y="487.94" width="14.89" height="9.08" fill="#c91b00"/><rect x="153.21" y="487.94" width="3.87" height="9.08" fill="#c91b00"/><rect x="186.27" y="487.94" width="3.87" height="9.08" fill="#c91b00"/><rect x="193.61" y="487.94" width="3.87" height="9.08" fill="#c91b00"/><rect x="245.03" y="487.94" width="3.87" height="9.08" fill="#c91b00"/><rect x="252.38" y="487.94" width="3.87" height="9.08" fill="#c91b00"/><rect x="278.09" y="487.94" width="7.55" height="9.08" fill="#c91b00"/><rect x="402.97" y="487.94" width="7.55" height="9.08" fill="#c91b00"/><rect x="413.99" y="487.94" width="7.55" height="9.08" fill="#c91b00"/><rect x="447.05" y="487.94" width="11.22" height="9.08" fill="#c91b00"/><rect x="461.74" y="487.94" width="3.87" height="9.08" fill="#c91b00"/><rect x="32.00" y="489.06" width="3.87" height="7.96" fill="#00c200"/><rect x="39.35" y="489.06" width="3.87" height="7.96" fill="#00c200"/><rect x="156.88" y="489.06" width="3.87" height="7.96" fill="#00c200"/><rect x="171.57" y="489.06" width="3.87" height="7.96" fill="#00c200"/><rect x="219.32" y="489.06" width="3.87" height="7.96" fill="#00c200"/><rect x="259.73" y="489.06" width="3.87" height="7.96" fill="#00c200"/><rect x="270.75" y="489.06" width="3.87" height="7.96" fill="#00c200"/><rect x="333.19" y="489.06" width="7.55" height="7.96" fill="#00c200"/><rect x="388.28" y="489.06" width="3.87" height="7.96" fill="#00c200"/><rect x="395.63" y="489.06" width="3.87" height="7.96" fill="#00c200"/><rect x="439.70" y="489.06" width="3.87" height="7.96" fill="#00c200"/><rect x="230.34" y="489.06" width="3.87" height="7.96" fill="#c91b00"/><rect x="410.32" y="489.06" width="3.87" height="7.96" fill="#c91b00"/><rect x="443.38" y="489.06" width="3.87" height="7.96" fill="#c91b00"/><rect x="358.90" y="489.06" width="3.87" height="7.96" fill="#c7c400"/><rect x="399.30" y="489.06" width="3.87" height="7.96" fill="#c7c400"/><rect x="223.00" y="490.17" width="3.87" height="6.85" fill="#00c200"/><rect x="325.84" y="490.17" width="3.87" height="6.85" fill="#00c200"/><rect x="149.54" y="490.17" width="3.87" height="6.85" fill="#c91b00"/><rect x="487.45" y="490.17" width="3.87" height="6.85" fill="#c91b00"/><rect x="142.19" y="490.17" width="3.87" height="6.85" fill="#c7c400"/><rect x="263.40" y="490.17" width="3.87" height="6.85" fill="#c7c400"/><rect x="428.68" y="490.17" width="3.87" height="6.85" fill="#c7c400"/><rect x="138.52" y="491.29" width="3.87" height="5.73" fill="#00c200"/><rect x="256.05" y="491.29" width="3.87" height="5.73" fill="#00c200"/><rect x="344.20" y="491.29" width="3.87" height="5.73" fill="#00c200"/><rect x="355.22" y="491.29" width="3.87" height="5.73" fill="#00c200"/><rect x="380.94" y="491.29" width="3.87" height="5.73" fill="#00c200"/><rect x="391.95" y="491.29" width="3.87" height="5.73" fill="#00c200"/><rect x="366.24" y="491.29" width="3.87" height="5.73" fill="#c91b00"/><rect x="134.84" y="492.40" width="3.87" height="4.62" fill="#00c200"/><rect x="160.56" y="492.40" width="3.87" height="4.62" fill="#00c200"/><rect x="208.30" y="492.40" width="3.87" height="4.62" fill="#00c200"/><rect x="267.07" y="492.40" width="3.87" height="4.62" fill="#00c200"/><rect x="318.49" y="492.40" width="3.87" height="4.62" fill="#00c200"/><rect x="329.51" y="492.40" width="3.87" height="4.62" fill="#00c200"/><rect x="145.86" y="492.40" width="3.87" height="4.62" fill="#c91b00"/><rect x="131.17" y="492.40" width="3.87" height="4.62" fill="#c7c400"/><rect x="274.42" y="492.40" width="3.87" height="4.62" fill="#c7c400"/><rect x="35.67" y="493.52" width="3.87" height="3.50" fill="#00c200"/><rect x="127.50" y="493.52" width="3.87" height="3.50" fill="#00c200"/><rect x="164.23" y="493.52" width="3.87" height="3.50" fill="#00c200"/><rect x="204.63" y="493.52" width="3.87" height="3.50" fill="#00c200"/><rect x="307.48" y="493.52" width="3.87" height="3.50" fill="#00c200"/><rect x="351.55" y="493.52" width="3.87" height="3.50" fill="#00c200"/><rect x="472.76" y="493.52" width="3.87" height="3.50" fill="#00c200"/><rect x="189.94" y="493.52" width="3.87" height="3.50" fill="#c91b00"/><rect x="234.02" y="493.52" width="3.87" height="3.50" fill="#c91b00"/><rect x="483.78" y="493.52" width="3.87" height="3.50" fill="#c91b00"/><rect x="167.90" y="494.64" width="3.87" height="2.38" fill="#00c200"/><rect x="175.25" y="494.64" width="3.87" height="2.38" fill="#00c200"/><rect x="211.98" y="494.64" width="3.87" height="2.38" fill="#00c200"/><rect x="292.78" y="494.64" width="3.87" height="2.38" fill="#00c200"/><rect x="303.80" y="494.64" width="3.87" height="2.38" fill="#00c200"/><rect x="237.69" y="494.64" width="7.55" height="2.38" fill="#c91b00"/><rect x="83.42" y="494.64" width="3.87" height="2.38" fill="#c7c400"/><rect x="226.67" y="494.64" width="3.87" height="2.38" fill="#c7c400"/><rect x="61.38" y="495.75" width="3.87" height="1.27" fill="#00c200"/><rect x="68.73" y="495.75" width="14.89" height="1.27" fill="#00c200"/><rect x="105.46" y="495.75" width="11.22" height="1.27" fill="#00c200"/><rect x="120.15" y="495.75" width="7.55" height="1.27" fill="#00c200"/><rect x="178.92" y="495.75" width="3.87" height="1.27" fill="#00c200"/><rect x="197.28" y="495.75" width="7.55" height="1.27" fill="#00c200"/><rect x="215.65" y="495.75" width="3.87" height="1.27" fill="#00c200"/><rect x="248.71" y="495.75" width="3.87" height="1.27" fill="#00c200"/><rect x="285.44" y="495.75" width="7.55" height="1.27" fill="#00c200"/><rect x="296.46" y="495.75" width="7.55" height="1.27" fill="#00c200"/><rect x="311.15" y="495.75" width="7.55" height="1.27" fill="#00c200"/><rect x="322.17" y="495.75" width="3.87" height="1.27" fill="#00c200"/><rect x="340.53" y="495.75" width="3.87" height="1.27" fill="#00c200"/><rect x="347.88" y="495.75" width="3.87" height="1.27" fill="#00c200"/><rect x="369.92" y="495.75" width="11.22" height="1.27" fill="#00c200"/><rect x="384.61" y="495.75" width="3.87" height="1.27" fill="#00c200"/><rect x="421.34" y="495.75" width="3.87" height="1.27" fill="#00c200"/><rect x="432.36" y="495.75" width="7.55" height="1.27" fill="#00c200"/><rect x="458.07" y="495.75" width="3.87" height="1.27" fill="#00c200"/><rect x="465.41" y="495.75" width="7.55" height="1.27" fill="#00c200"/><rect x="476.43" y="495.75" width="3.87" height="1.27" fill="#00c200"/><rect x="87.09" y="495.75" width="3.87" height="1.27" fill="#c7c400"/><rect x="182.59" y="495.75" width="3.87" height="1.27" fill="#c7c400"/><rect x="480.11" y="495.75" width="3.87" height="1.27" fill="#c7c400"/><rect x="68.73" y="496.87" width="3.87" height="1.27" fill="#00c200"/><rect x="425.01" y="496.87" width="3.87" height="1.27" fill="#00c200"/><rect x="333.19" y="496.87" width="3.87" height="1.27" fill="#c7c400"/><rect x="153.21" y="496.87" width="3.87" height="2.38" fill="#00c200"/><rect x="329.51" y="496.87" width="3.87" height="2.38" fill="#00c200"/><rect x="377.26" y="496.87" width="3.87" height="2.38" fill="#00c200"/><rect x="123.83" y="496.87" width="3.87" height="2.38" fill="#c7c400"/><rect x="160.56" y="496.87" width="3.87" height="2.38" fill="#c7c400"/><rect x="278.09" y="496.87" width="3.87" height="3.50" fill="#00c200"/><rect x="325.84" y="496.87" width="3.87" height="3.50" fill="#00c200"/><rect x="432.36" y="496.87" width="3.87" height="3.50" fill="#c7c400"/><rect x="120.15" y="496.87" width="3.87" height="4.62" fill="#00c200"/><rect x="248.71" y="496.87" width="3.87" height="4.62" fill="#00c200"/><rect x="373.59" y="496.87" width="3.87" height="4.62" fill="#00c200"/><rect x="252.38" y="496.87" width="3.87" height="4.62" fill="#c7c400"/><rect x="428.68" y="496.87" width="3.87" height="4.62" fill="#c7c400"/><rect x="65.06" y="496.87" width="3.87" height="5.73" fill="#00c200"/><rect x="204.63" y="496.87" width="3.87" height="5.73" fill="#00c200"/><rect x="480.11" y="496.87" width="3.87" height="5.73" fill="#00c200"/><rect x="189.94" y="496.87" width="3.87" height="6.85" fill="#00c200"/><rect x="215.65" y="496.87" width="3.87" height="6.85" fill="#00c200"/><rect x="39.35" y="496.87" width="3.87" height="7.96" fill="#00c200"/><rect x="35.67" y="496.87" width="3.87" height="7.96" fill="#c7c400"/><rect x="109.13" y="496.87" width="3.87" height="7.96" fill="#c7c400"/><rect x="156.88" y="496.87" width="3.87" height="9.08" fill="#00c200"/><rect x="208.30" y="496.87" width="3.87" height="9.08" fill="#00c200"/><rect x="476.43" y="496.87" width="3.87" height="9.08" fill="#00c200"/><rect x="46.69" y="496.87" width="3.87" height="9.08" fill="#c91b00"/><rect x="72.40" y="496.87" width="11.22" height="9.08" fill="#c91b00"/><rect x="87.09" y="496.87" width="3.87" height="9.08" fill="#c91b00"/><rect x="127.50" y="496.87" width="7.55" height="9.08" fill="#c91b00"/><rect x="164.23" y="496.87" width="11.22" height="9.08" fill="#c91b00"/><rect x="178.92" y="496.87" width="3.87" height="9.08" fill="#c91b00"/><rect x="200.96" y="496.87" width="3.87" height="9.08" fill="#c91b00"/><rect x="219.32" y="496.87" width="3.87" height="9.08" fill="#c91b00"/><rect x="256.05" y="496.87" width="3.87" height="9.08" fill="#c91b00"/><rect x="336.86" y="496.87" width="14.89" height="9.08" fill="#c91b00"/><rect x="380.94" y="496.87" width="14.89" height="9.08" fill="#c91b00"/><rect x="421.34" y="496.87" width="3.87" height="9.08" fill="#c91b00"/><rect x="32.00" y="496.87" width="3.87" height="9.08" fill="#c7c400"/><rect x="116.48" y="497.99" width="3.87" height="7.96" fill="#00c200"/><rect x="149.54" y="497.99" width="3.87" height="7.96" fill="#00c200"/><rect x="245.03" y="497.99" width="3.87" height="7.96" fill="#00c200"/><rect x="369.92" y="497.99" width="3.87" height="7.96" fill="#00c200"/><rect x="333.19" y="497.99" width="3.87" height="7.96" fill="#c91b00"/><rect x="68.73" y="497.99" width="3.87" height="7.96" fill="#c7c400"/><rect x="425.01" y="497.99" width="3.87" height="7.96" fill="#c7c400"/><rect x="61.38" y="499.10" width="3.87" height="6.85" fill="#00c200"/><rect x="241.36" y="499.10" width="3.87" height="6.85" fill="#00c200"/><rect x="123.83" y="499.10" width="3.87" height="6.85" fill="#c91b00"/><rect x="160.56" y="499.10" width="3.87" height="6.85" fill="#c91b00"/><rect x="153.21" y="499.10" width="3.87" height="6.85" fill="#c7c400"/><rect x="329.51" y="499.10" width="3.87" height="6.85" fill="#c7c400"/><rect x="377.26" y="499.10" width="3.87" height="6.85" fill="#c7c400"/><rect x="145.86" y="500.22" width="3.87" height="5.73" fill="#00c200"/><rect x="406.65" y="500.22" width="3.87" height="5.73" fill="#00c200"/><rect x="469.09" y="500.22" width="3.87" height="5.73" fill="#00c200"/><rect x="432.36" y="500.22" width="3.87" height="5.73" fill="#c91b00"/><rect x="278.09" y="500.22" width="3.87" height="5.73" fill="#c7c400"/><rect x="325.84" y="500.22" width="3.87" height="5.73" fill="#c7c400"/><rect x="94.44" y="501.33" width="3.87" height="4.62" fill="#00c200"/><rect x="112.81" y="501.33" width="3.87" height="4.62" fill="#00c200"/><rect x="211.98" y="501.33" width="3.87" height="4.62" fill="#00c200"/><rect x="230.34" y="501.33" width="3.87" height="4.62" fill="#00c200"/><rect x="267.07" y="501.33" width="3.87" height="4.62" fill="#00c200"/><rect x="322.17" y="501.33" width="3.87" height="4.62" fill="#00c200"/><rect x="417.67" y="501.33" width="3.87" height="4.62" fill="#00c200"/><rect x="252.38" y="501.33" width="3.87" height="4.62" fill="#c91b00"/><rect x="428.68" y="501.33" width="3.87" height="4.62" fill="#c91b00"/><rect x="120.15" y="501.33" width="3.87" height="4.62" fill="#c7c400"/><rect x="248.71" y="501.33" width="3.87" height="4.62" fill="#c7c400"/><rect x="373.59" y="501.33" width="3.87" height="4.62" fill="#c7c400"/><rect x="57.71" y="502.45" width="3.87" height="3.50" fill="#00c200"/><rect x="142.19" y="502.45" width="3.87" height="3.50" fill="#00c200"/><rect x="226.67" y="502.45" width="3.87" height="3.50" fill="#00c200"/><rect x="472.76" y="502.45" width="3.87" height="3.50" fill="#00c200"/><rect x="65.06" y="502.45" width="3.87" height="3.50" fill="#c7c400"/><rect x="204.63" y="502.45" width="3.87" height="3.50" fill="#c7c400"/><rect x="480.11" y="502.45" width="3.87" height="3.50" fill="#c7c400"/><rect x="311.15" y="503.57" width="3.87" height="2.38" fill="#00c200"/><rect x="402.97" y="503.57" width="3.87" height="2.38" fill="#00c200"/><rect x="439.70" y="503.57" width="3.87" height="2.38" fill="#00c200"/><rect x="458.07" y="503.57" width="3.87" height="2.38" fill="#00c200"/><rect x="189.94" y="503.57" width="3.87" height="2.38" fill="#c7c400"/><rect x="215.65" y="503.57" width="3.87" height="2.38" fill="#c7c400"/><rect x="50.37" y="504.68" width="7.55" height="1.27" fill="#00c200"/><rect x="90.77" y="504.68" width="3.87" height="1.27" fill="#00c200"/><rect x="98.11" y="504.68" width="11.22" height="1.27" fill="#00c200"/><rect x="134.84" y="504.68" width="7.55" height="1.27" fill="#00c200"/><rect x="175.25" y="504.68" width="3.87" height="1.27" fill="#00c200"/><rect x="182.59" y="504.68" width="7.55" height="1.27" fill="#00c200"/><rect x="193.61" y="504.68" width="7.55" height="1.27" fill="#00c200"/><rect x="223.00" y="504.68" width="3.87" height="1.27" fill="#00c200"/><rect x="234.02" y="504.68" width="7.55" height="1.27" fill="#00c200"/><rect x="259.73" y="504.68" width="7.55" height="1.27" fill="#00c200"/><rect x="270.75" y="504.68" width="7.55" height="1.27" fill="#00c200"/><rect x="281.76" y="504.68" width="29.58" height="1.27" fill="#00c200"/><rect x="314.82" y="504.68" width="7.55" height="1.27" fill="#00c200"/><rect x="351.55" y="504.68" width="18.57" height="1.27" fill="#00c200"/><rect x="395.63" y="504.68" width="7.55" height="1.27" fill="#00c200"/><rect x="410.32" y="504.68" width="7.55" height="1.27" fill="#00c200"/><rect x="436.03" y="504.68" width="3.87" height="1.27" fill="#00c200"/><rect x="443.38" y="504.68" width="14.89" height="1.27" fill="#00c200"/><rect x="461.74" y="504.68" width="7.55" height="1.27" fill="#00c200"/><rect x="483.78" y="504.68" width="7.55" height="1.27" fill="#00c200"/><rect x="35.67" y="504.68" width="3.87" height="1.27" fill="#c91b00"/><rect x="109.13" y="504.68" width="3.87" height="1.27" fill="#c91b00"/><rect x="39.35" y="504.68" width="3.87" height="1.27" fill="#c7c400"/><rect x="84.87" y="499.17" width="0.85" height="4.0" fill="#c91b00"/><rect x="84.87" y="503.77" width="0.85" height="0.9" fill="#c91b00"/><rect x="90.77" y="505.80" width="3.87" height="1.27" fill="#00c200"/><rect x="450.72" y="505.80" width="3.87" height="1.27" fill="#00c200"/><rect x="461.74" y="505.80" width="3.87" height="1.27" fill="#00c200"/><rect x="54.04" y="505.80" width="3.87" height="1.27" fill="#c7c400"/><rect x="395.63" y="505.80" width="3.87" height="1.27" fill="#c7c400"/><rect x="388.28" y="505.80" width="3.87" height="2.38" fill="#00c200"/><rect x="87.09" y="505.80" width="3.87" height="3.50" fill="#00c200"/><rect x="230.34" y="505.80" width="3.87" height="3.50" fill="#00c200"/><rect x="223.00" y="505.80" width="3.87" height="3.50" fill="#c7c400"/><rect x="50.37" y="505.80" width="3.87" height="4.62" fill="#00c200"/><rect x="98.11" y="505.80" width="3.87" height="4.62" fill="#00c200"/><rect x="131.17" y="505.80" width="3.87" height="4.62" fill="#00c200"/><rect x="391.95" y="505.80" width="3.87" height="4.62" fill="#00c200"/><rect x="454.39" y="505.80" width="3.87" height="4.62" fill="#00c200"/><rect x="234.02" y="505.80" width="3.87" height="4.62" fill="#c7c400"/><rect x="307.48" y="505.80" width="3.87" height="5.73" fill="#00c200"/><rect x="219.32" y="505.80" width="3.87" height="5.73" fill="#c7c400"/><rect x="399.30" y="505.80" width="3.87" height="5.73" fill="#c7c400"/><rect x="380.94" y="505.80" width="3.87" height="6.85" fill="#00c200"/><rect x="384.61" y="505.80" width="3.87" height="7.96" fill="#c7c400"/><rect x="200.96" y="505.80" width="3.87" height="9.08" fill="#00c200"/><rect x="373.59" y="505.80" width="3.87" height="9.08" fill="#00c200"/><rect x="57.71" y="505.80" width="11.22" height="9.08" fill="#c91b00"/><rect x="72.40" y="505.80" width="3.87" height="9.08" fill="#c91b00"/><rect x="94.44" y="505.80" width="3.87" height="9.08" fill="#c91b00"/><rect x="101.79" y="505.80" width="7.55" height="9.08" fill="#c91b00"/><rect x="142.19" y="505.80" width="3.87" height="9.08" fill="#c91b00"/><rect x="204.63" y="505.80" width="7.55" height="9.08" fill="#c91b00"/><rect x="226.67" y="505.80" width="3.87" height="9.08" fill="#c91b00"/><rect x="241.36" y="505.80" width="3.87" height="9.08" fill="#c91b00"/><rect x="256.05" y="505.80" width="3.87" height="9.08" fill="#c91b00"/><rect x="347.88" y="505.80" width="18.57" height="9.08" fill="#c91b00"/><rect x="410.32" y="505.80" width="3.87" height="9.08" fill="#c91b00"/><rect x="156.88" y="505.80" width="3.87" height="9.08" fill="#c7c400"/><rect x="197.28" y="505.80" width="3.87" height="9.08" fill="#c7c400"/><rect x="211.98" y="506.92" width="3.87" height="7.96" fill="#00c200"/><rect x="237.69" y="506.92" width="3.87" height="7.96" fill="#00c200"/><rect x="54.04" y="506.92" width="3.87" height="7.96" fill="#c91b00"/><rect x="395.63" y="506.92" width="3.87" height="7.96" fill="#c91b00"/><rect x="90.77" y="506.92" width="3.87" height="7.96" fill="#c7c400"/><rect x="450.72" y="506.92" width="3.87" height="7.96" fill="#c7c400"/><rect x="461.74" y="506.92" width="3.87" height="7.96" fill="#c7c400"/><rect x="120.15" y="508.03" width="3.87" height="6.85" fill="#00c200"/><rect x="388.28" y="508.03" width="3.87" height="6.85" fill="#c7c400"/><rect x="83.42" y="509.15" width="3.87" height="5.73" fill="#00c200"/><rect x="215.65" y="509.15" width="3.87" height="5.73" fill="#00c200"/><rect x="303.80" y="509.15" width="3.87" height="5.73" fill="#00c200"/><rect x="377.26" y="509.15" width="3.87" height="5.73" fill="#00c200"/><rect x="223.00" y="509.15" width="3.87" height="5.73" fill="#c91b00"/><rect x="87.09" y="509.15" width="3.87" height="5.73" fill="#c7c400"/><rect x="230.34" y="509.15" width="3.87" height="5.73" fill="#c7c400"/><rect x="175.25" y="510.26" width="3.87" height="4.62" fill="#00c200"/><rect x="417.67" y="510.26" width="3.87" height="4.62" fill="#00c200"/><rect x="469.09" y="510.26" width="3.87" height="4.62" fill="#00c200"/><rect x="234.02" y="510.26" width="3.87" height="4.62" fill="#c91b00"/><rect x="50.37" y="510.26" width="3.87" height="4.62" fill="#c7c400"/><rect x="98.11" y="510.26" width="3.87" height="4.62" fill="#c7c400"/><rect x="131.17" y="510.26" width="3.87" height="4.62" fill="#c7c400"/><rect x="391.95" y="510.26" width="3.87" height="4.62" fill="#c7c400"/><rect x="454.39" y="510.26" width="3.87" height="4.62" fill="#c7c400"/><rect x="79.75" y="511.38" width="3.87" height="3.50" fill="#00c200"/><rect x="138.52" y="511.38" width="3.87" height="3.50" fill="#00c200"/><rect x="314.82" y="511.38" width="3.87" height="3.50" fill="#00c200"/><rect x="219.32" y="511.38" width="3.87" height="3.50" fill="#c91b00"/><rect x="399.30" y="511.38" width="3.87" height="3.50" fill="#c91b00"/><rect x="307.48" y="511.38" width="3.87" height="3.50" fill="#c7c400"/><rect x="134.84" y="512.50" width="3.87" height="2.38" fill="#00c200"/><rect x="145.86" y="512.50" width="3.87" height="2.38" fill="#00c200"/><rect x="406.65" y="512.50" width="3.87" height="2.38" fill="#00c200"/><rect x="458.07" y="512.50" width="3.87" height="2.38" fill="#00c200"/><rect x="380.94" y="512.50" width="3.87" height="2.38" fill="#c7c400"/><rect x="32.00" y="513.61" width="18.57" height="1.27" fill="#00c200"/><rect x="76.08" y="513.61" width="3.87" height="1.27" fill="#00c200"/><rect x="109.13" y="513.61" width="11.22" height="1.27" fill="#00c200"/><rect x="123.83" y="513.61" width="7.55" height="1.27" fill="#00c200"/><rect x="149.54" y="513.61" width="7.55" height="1.27" fill="#00c200"/><rect x="160.56" y="513.61" width="14.89" height="1.27" fill="#00c200"/><rect x="178.92" y="513.61" width="18.57" height="1.27" fill="#00c200"/><rect x="245.03" y="513.61" width="11.22" height="1.27" fill="#00c200"/><rect x="259.73" y="513.61" width="44.28" height="1.27" fill="#00c200"/><rect x="311.15" y="513.61" width="3.87" height="1.27" fill="#00c200"/><rect x="318.49" y="513.61" width="25.91" height="1.27" fill="#00c200"/><rect x="366.24" y="513.61" width="7.55" height="1.27" fill="#00c200"/><rect x="402.97" y="513.61" width="3.87" height="1.27" fill="#00c200"/><rect x="413.99" y="513.61" width="3.87" height="1.27" fill="#00c200"/><rect x="421.34" y="513.61" width="29.58" height="1.27" fill="#00c200"/><rect x="465.41" y="513.61" width="3.87" height="1.27" fill="#00c200"/><rect x="472.76" y="513.61" width="18.57" height="1.27" fill="#00c200"/><rect x="384.61" y="513.61" width="3.87" height="1.27" fill="#c91b00"/><rect x="345.65" y="508.10" width="0.85" height="4.0" fill="#c91b00"/><rect x="345.65" y="512.70" width="0.85" height="0.9" fill="#c91b00"/><rect x="193.61" y="514.73" width="3.87" height="4.62" fill="#00c200"/><rect x="46.69" y="514.73" width="3.87" height="5.73" fill="#00c200"/><rect x="197.28" y="514.73" width="3.87" height="5.73" fill="#00c200"/><rect x="237.69" y="514.73" width="3.87" height="5.73" fill="#00c200"/><rect x="248.71" y="514.73" width="3.87" height="6.85" fill="#00c200"/><rect x="347.88" y="514.73" width="3.87" height="6.85" fill="#00c200"/><rect x="384.61" y="514.73" width="3.87" height="6.85" fill="#00c200"/><rect x="98.11" y="514.73" width="3.87" height="7.96" fill="#00c200"/><rect x="300.13" y="514.73" width="3.87" height="7.96" fill="#00c200"/><rect x="436.03" y="514.73" width="7.55" height="7.96" fill="#00c200"/><rect x="344.20" y="515.85" width="3.87" height="7.96" fill="#00c200"/><rect x="138.52" y="516.96" width="3.87" height="6.85" fill="#00c200"/><rect x="145.86" y="516.96" width="3.87" height="6.85" fill="#00c200"/><rect x="340.53" y="516.96" width="3.87" height="6.85" fill="#00c200"/><rect x="395.63" y="516.96" width="3.87" height="6.85" fill="#00c200"/><rect x="483.78" y="516.96" width="3.87" height="6.85" fill="#00c200"/><rect x="90.77" y="518.08" width="3.87" height="5.73" fill="#00c200"/><rect x="245.03" y="518.08" width="3.87" height="5.73" fill="#00c200"/><rect x="296.46" y="518.08" width="3.87" height="5.73" fill="#00c200"/><rect x="336.86" y="518.08" width="3.87" height="5.73" fill="#00c200"/><rect x="241.36" y="519.20" width="3.87" height="4.62" fill="#00c200"/><rect x="388.28" y="519.20" width="3.87" height="4.62" fill="#00c200"/><rect x="447.05" y="519.20" width="3.87" height="4.62" fill="#00c200"/><rect x="193.61" y="519.20" width="3.87" height="4.62" fill="#c7c400"/><rect x="43.02" y="520.31" width="3.87" height="3.50" fill="#00c200"/><rect x="94.44" y="520.31" width="3.87" height="3.50" fill="#00c200"/><rect x="101.79" y="520.31" width="3.87" height="3.50" fill="#00c200"/><rect x="167.90" y="520.31" width="3.87" height="3.50" fill="#00c200"/><rect x="391.95" y="520.31" width="3.87" height="3.50" fill="#00c200"/><rect x="46.69" y="520.31" width="3.87" height="3.50" fill="#c7c400"/><rect x="197.28" y="520.31" width="3.87" height="3.50" fill="#c7c400"/><rect x="237.69" y="520.31" width="3.87" height="3.50" fill="#c7c400"/><rect x="105.46" y="521.43" width="3.87" height="2.38" fill="#00c200"/><rect x="112.81" y="521.43" width="3.87" height="2.38" fill="#00c200"/><rect x="189.94" y="521.43" width="3.87" height="2.38" fill="#00c200"/><rect x="289.11" y="521.43" width="3.87" height="2.38" fill="#00c200"/><rect x="358.90" y="521.43" width="3.87" height="2.38" fill="#00c200"/><rect x="406.65" y="521.43" width="3.87" height="2.38" fill="#00c200"/><rect x="428.68" y="521.43" width="3.87" height="2.38" fill="#00c200"/><rect x="461.74" y="521.43" width="3.87" height="2.38" fill="#00c200"/><rect x="248.71" y="521.43" width="3.87" height="2.38" fill="#c7c400"/><rect x="347.88" y="521.43" width="3.87" height="2.38" fill="#c7c400"/><rect x="384.61" y="521.43" width="3.87" height="2.38" fill="#c7c400"/><rect x="32.00" y="522.54" width="11.22" height="1.27" fill="#00c200"/><rect x="50.37" y="522.54" width="40.60" height="1.27" fill="#00c200"/><rect x="109.13" y="522.54" width="3.87" height="1.27" fill="#00c200"/><rect x="116.48" y="522.54" width="22.24" height="1.27" fill="#00c200"/><rect x="142.19" y="522.54" width="3.87" height="1.27" fill="#00c200"/><rect x="149.54" y="522.54" width="18.57" height="1.27" fill="#00c200"/><rect x="171.57" y="522.54" width="18.57" height="1.27" fill="#00c200"/><rect x="200.96" y="522.54" width="36.93" height="1.27" fill="#00c200"/><rect x="252.38" y="522.54" width="36.93" height="1.27" fill="#00c200"/><rect x="292.78" y="522.54" width="3.87" height="1.27" fill="#00c200"/><rect x="303.80" y="522.54" width="33.26" height="1.27" fill="#00c200"/><rect x="351.55" y="522.54" width="7.55" height="1.27" fill="#00c200"/><rect x="362.57" y="522.54" width="22.24" height="1.27" fill="#00c200"/><rect x="399.30" y="522.54" width="7.55" height="1.27" fill="#00c200"/><rect x="410.32" y="522.54" width="18.57" height="1.27" fill="#00c200"/><rect x="432.36" y="522.54" width="3.87" height="1.27" fill="#00c200"/><rect x="443.38" y="522.54" width="3.87" height="1.27" fill="#00c200"/><rect x="450.72" y="522.54" width="11.22" height="1.27" fill="#00c200"/><rect x="465.41" y="522.54" width="18.57" height="1.27" fill="#00c200"/><rect x="487.45" y="522.54" width="3.87" height="1.27" fill="#00c200"/><rect x="98.11" y="522.54" width="3.87" height="1.27" fill="#c7c400"/><rect x="300.13" y="522.54" width="3.87" height="1.27" fill="#c7c400"/><rect x="436.03" y="522.54" width="7.55" height="1.27" fill="#c7c400"/><rect x="35.67" y="523.66" width="3.87" height="9.08" fill="#c7c400"/><rect x="32.00" y="531.47" width="3.87" height="1.27" fill="#00c200"/><rect x="39.35" y="531.47" width="18.57" height="1.27" fill="#00c200"/><rect x="59.16" y="525.96" width="0.85" height="4.0" fill="#c91b00"/><rect x="59.16" y="530.56" width="0.85" height="0.9" fill="#c91b00"/><rect x="98.11" y="559.38" width="3.87" height="4.62" fill="#00c200"/><rect x="50.37" y="559.38" width="3.87" height="7.96" fill="#00c200"/><rect x="87.09" y="559.38" width="3.87" height="7.96" fill="#00c200"/><rect x="94.44" y="559.38" width="3.87" height="7.96" fill="#00c200"/><rect x="46.69" y="560.50" width="3.87" height="7.96" fill="#00c200"/><rect x="90.77" y="560.50" width="3.87" height="7.96" fill="#00c200"/><rect x="98.11" y="563.85" width="3.87" height="4.62" fill="#c7c400"/><rect x="39.35" y="566.08" width="3.87" height="2.38" fill="#00c200"/><rect x="43.02" y="567.19" width="3.87" height="1.27" fill="#00c200"/><rect x="54.04" y="567.19" width="33.26" height="1.27" fill="#00c200"/><rect x="50.37" y="567.19" width="3.87" height="1.27" fill="#c7c400"/><rect x="87.09" y="567.19" width="3.87" height="1.27" fill="#c7c400"/><rect x="94.44" y="567.19" width="3.87" height="1.27" fill="#c7c400"/><rect x="33.45" y="561.68" width="0.85" height="4.0" fill="#c91b00"/><rect x="33.45" y="566.28" width="0.85" height="0.9" fill="#c91b00"/><rect x="37.12" y="561.68" width="0.85" height="4.0" fill="#c91b00"/><rect x="37.12" y="566.28" width="0.85" height="0.9" fill="#c91b00"/><rect x="101.79" y="559.38" width="3.673" height="8.93" fill="#d0d0d0"/><rect x="515.29" y="59.30" width="3.87" height="9.08" fill="#b5452f"/><rect x="632.83" y="77.16" width="3.87" height="1.27" fill="#2fb32f"/><rect x="500.60" y="77.16" width="3.87" height="1.27" fill="#b3ad2f"/><rect x="555.70" y="77.16" width="3.87" height="1.27" fill="#b3ad2f"/><rect x="588.75" y="77.16" width="3.87" height="1.27" fill="#b3ad2f"/><rect x="599.77" y="77.16" width="3.87" height="1.27" fill="#b3ad2f"/><rect x="673.23" y="77.16" width="3.87" height="1.27" fill="#b3ad2f"/><rect x="537.33" y="77.16" width="3.87" height="2.38" fill="#2fb32f"/><rect x="544.68" y="77.16" width="3.87" height="2.38" fill="#2fb32f"/><rect x="629.15" y="77.16" width="3.87" height="2.38" fill="#2fb32f"/><rect x="585.08" y="77.16" width="3.87" height="2.38" fill="#b3ad2f"/><rect x="669.56" y="77.16" width="3.87" height="3.50" fill="#b3ad2f"/><rect x="621.81" y="77.16" width="3.87" height="4.62" fill="#2fb32f"/><rect x="717.31" y="77.16" width="3.87" height="4.62" fill="#2fb32f"/><rect x="754.04" y="77.16" width="3.87" height="4.62" fill="#2fb32f"/><rect x="596.10" y="77.16" width="3.87" height="5.73" fill="#b3ad2f"/><rect x="625.48" y="77.16" width="3.87" height="7.96" fill="#2fb32f"/><rect x="706.29" y="77.16" width="3.87" height="7.96" fill="#2fb32f"/><rect x="541.00" y="77.16" width="3.87" height="7.96" fill="#b3ad2f"/><rect x="504.27" y="77.16" width="14.89" height="9.08" fill="#b5452f"/><rect x="526.31" y="77.16" width="3.87" height="9.08" fill="#b5452f"/><rect x="533.66" y="77.16" width="3.87" height="9.08" fill="#b5452f"/><rect x="548.35" y="77.16" width="7.55" height="9.08" fill="#b5452f"/><rect x="574.06" y="77.16" width="3.87" height="9.08" fill="#b5452f"/><rect x="592.43" y="77.16" width="3.87" height="9.08" fill="#b5452f"/><rect x="603.44" y="77.16" width="7.55" height="9.08" fill="#b5452f"/><rect x="636.50" y="77.16" width="7.55" height="9.08" fill="#b5452f"/><rect x="676.90" y="77.16" width="14.89" height="9.08" fill="#b5452f"/><rect x="698.94" y="77.16" width="3.87" height="9.08" fill="#b5452f"/><rect x="720.98" y="77.16" width="11.22" height="9.08" fill="#b5452f"/><rect x="739.35" y="77.16" width="3.87" height="9.08" fill="#b5452f"/><rect x="665.88" y="78.28" width="3.87" height="7.96" fill="#2fb32f"/><rect x="713.63" y="78.28" width="3.87" height="7.96" fill="#2fb32f"/><rect x="500.60" y="78.28" width="3.87" height="7.96" fill="#b5452f"/><rect x="555.70" y="78.28" width="3.87" height="7.96" fill="#b5452f"/><rect x="588.75" y="78.28" width="3.87" height="7.96" fill="#b5452f"/><rect x="599.77" y="78.28" width="3.87" height="7.96" fill="#b5452f"/><rect x="673.23" y="78.28" width="3.87" height="7.96" fill="#b5452f"/><rect x="632.83" y="78.28" width="3.87" height="7.96" fill="#b3ad2f"/><rect x="585.08" y="79.39" width="3.87" height="6.85" fill="#b5452f"/><rect x="537.33" y="79.39" width="3.87" height="6.85" fill="#b3ad2f"/><rect x="544.68" y="79.39" width="3.87" height="6.85" fill="#b3ad2f"/><rect x="629.15" y="79.39" width="3.87" height="6.85" fill="#b3ad2f"/><rect x="577.73" y="80.51" width="7.55" height="5.73" fill="#2fb32f"/><rect x="654.87" y="80.51" width="3.87" height="5.73" fill="#2fb32f"/><rect x="746.69" y="80.51" width="3.87" height="5.73" fill="#2fb32f"/><rect x="669.56" y="80.51" width="3.87" height="5.73" fill="#b5452f"/><rect x="529.98" y="81.62" width="3.87" height="4.62" fill="#2fb32f"/><rect x="750.36" y="81.62" width="3.87" height="4.62" fill="#2fb32f"/><rect x="621.81" y="81.62" width="3.87" height="4.62" fill="#b3ad2f"/><rect x="717.31" y="81.62" width="3.87" height="4.62" fill="#b3ad2f"/><rect x="754.04" y="81.62" width="3.87" height="4.62" fill="#b3ad2f"/><rect x="596.10" y="82.74" width="3.87" height="3.50" fill="#b5452f"/><rect x="563.04" y="83.86" width="3.87" height="2.38" fill="#2fb32f"/><rect x="570.39" y="83.86" width="3.87" height="2.38" fill="#2fb32f"/><rect x="614.46" y="83.86" width="3.87" height="2.38" fill="#2fb32f"/><rect x="658.54" y="83.86" width="3.87" height="2.38" fill="#2fb32f"/><rect x="702.62" y="83.86" width="3.87" height="2.38" fill="#2fb32f"/><rect x="518.97" y="84.97" width="7.55" height="1.27" fill="#2fb32f"/><rect x="559.37" y="84.97" width="3.87" height="1.27" fill="#2fb32f"/><rect x="566.71" y="84.97" width="3.87" height="1.27" fill="#2fb32f"/><rect x="610.79" y="84.97" width="3.87" height="1.27" fill="#2fb32f"/><rect x="618.14" y="84.97" width="3.87" height="1.27" fill="#2fb32f"/><rect x="643.85" y="84.97" width="11.22" height="1.27" fill="#2fb32f"/><rect x="662.21" y="84.97" width="3.87" height="1.27" fill="#2fb32f"/><rect x="691.60" y="84.97" width="7.55" height="1.27" fill="#2fb32f"/><rect x="709.96" y="84.97" width="3.87" height="1.27" fill="#2fb32f"/><rect x="732.00" y="84.97" width="7.55" height="1.27" fill="#2fb32f"/><rect x="743.02" y="84.97" width="3.87" height="1.27" fill="#2fb32f"/><rect x="541.00" y="84.97" width="3.87" height="1.27" fill="#b5452f"/><rect x="625.48" y="84.97" width="3.87" height="1.27" fill="#b3ad2f"/><rect x="706.29" y="84.97" width="3.87" height="1.27" fill="#b3ad2f"/><rect x="566.71" y="255.76" width="3.87" height="1.27" fill="#2fb32f"/><rect x="577.73" y="255.76" width="3.87" height="1.27" fill="#2fb32f"/><rect x="684.25" y="255.76" width="3.87" height="1.27" fill="#2fb32f"/><rect x="695.27" y="255.76" width="3.87" height="1.27" fill="#2fb32f"/><rect x="720.98" y="255.76" width="3.87" height="1.27" fill="#2fb32f"/><rect x="754.04" y="255.76" width="3.87" height="1.27" fill="#2fb32f"/><rect x="809.13" y="255.76" width="3.87" height="1.27" fill="#2fb32f"/><rect x="588.75" y="255.76" width="3.87" height="1.27" fill="#b3ad2f"/><rect x="728.33" y="255.76" width="3.87" height="1.27" fill="#b3ad2f"/><rect x="820.15" y="255.76" width="3.87" height="1.27" fill="#b3ad2f"/><rect x="930.34" y="255.76" width="3.87" height="1.27" fill="#b3ad2f"/><rect x="533.66" y="255.76" width="3.87" height="2.38" fill="#2fb32f"/><rect x="581.41" y="255.76" width="3.87" height="2.38" fill="#2fb32f"/><rect x="757.71" y="255.76" width="3.87" height="2.38" fill="#b3ad2f"/><rect x="812.81" y="255.76" width="3.87" height="2.38" fill="#b3ad2f"/><rect x="585.08" y="255.76" width="3.87" height="3.50" fill="#b3ad2f"/><rect x="713.63" y="255.76" width="3.87" height="4.62" fill="#2fb32f"/><rect x="669.56" y="255.76" width="3.87" height="5.73" fill="#2fb32f"/><rect x="801.79" y="255.76" width="3.87" height="5.73" fill="#2fb32f"/><rect x="717.31" y="255.76" width="3.87" height="5.73" fill="#b3ad2f"/><rect x="724.65" y="255.76" width="3.87" height="5.73" fill="#b3ad2f"/><rect x="544.68" y="255.76" width="3.87" height="6.85" fill="#2fb32f"/><rect x="662.21" y="255.76" width="3.87" height="6.85" fill="#2fb32f"/><rect x="640.17" y="255.76" width="3.87" height="7.96" fill="#2fb32f"/><rect x="665.88" y="255.76" width="3.87" height="7.96" fill="#2fb32f"/><rect x="834.84" y="255.76" width="3.87" height="7.96" fill="#2fb32f"/><rect x="507.95" y="255.76" width="3.87" height="9.08" fill="#2fb32f"/><rect x="552.02" y="255.76" width="3.87" height="9.08" fill="#2fb32f"/><rect x="614.46" y="255.76" width="3.87" height="9.08" fill="#2fb32f"/><rect x="709.96" y="255.76" width="3.87" height="9.08" fill="#2fb32f"/><rect x="959.73" y="255.76" width="3.87" height="9.08" fill="#2fb32f"/><rect x="511.62" y="255.76" width="7.55" height="9.08" fill="#b5452f"/><rect x="592.43" y="255.76" width="11.22" height="9.08" fill="#b5452f"/><rect x="618.14" y="255.76" width="3.87" height="9.08" fill="#b5452f"/><rect x="739.35" y="255.76" width="3.87" height="9.08" fill="#b5452f"/><rect x="761.38" y="255.76" width="14.89" height="9.08" fill="#b5452f"/><rect x="779.75" y="255.76" width="3.87" height="9.08" fill="#b5452f"/><rect x="893.61" y="255.76" width="3.87" height="9.08" fill="#b5452f"/><rect x="904.63" y="255.76" width="7.55" height="9.08" fill="#b5452f"/><rect x="915.65" y="255.76" width="3.87" height="9.08" fill="#b5452f"/><rect x="937.69" y="255.76" width="11.22" height="9.08" fill="#b5452f"/><rect x="956.05" y="255.76" width="3.87" height="9.08" fill="#b5452f"/><rect x="687.92" y="255.76" width="3.87" height="9.08" fill="#b3ad2f"/><rect x="934.01" y="255.76" width="3.87" height="9.08" fill="#b3ad2f"/><rect x="518.97" y="256.88" width="3.87" height="7.96" fill="#2fb32f"/><rect x="541.00" y="256.88" width="3.87" height="7.96" fill="#2fb32f"/><rect x="588.75" y="256.88" width="3.87" height="7.96" fill="#b5452f"/><rect x="728.33" y="256.88" width="3.87" height="7.96" fill="#b5452f"/><rect x="820.15" y="256.88" width="3.87" height="7.96" fill="#b5452f"/><rect x="930.34" y="256.88" width="3.87" height="7.96" fill="#b5452f"/><rect x="566.71" y="256.88" width="3.87" height="7.96" fill="#b3ad2f"/><rect x="577.73" y="256.88" width="3.87" height="7.96" fill="#b3ad2f"/><rect x="684.25" y="256.88" width="3.87" height="7.96" fill="#b3ad2f"/><rect x="695.27" y="256.88" width="3.87" height="7.96" fill="#b3ad2f"/><rect x="720.98" y="256.88" width="3.87" height="7.96" fill="#b3ad2f"/><rect x="754.04" y="256.88" width="3.87" height="7.96" fill="#b3ad2f"/><rect x="809.13" y="256.88" width="3.87" height="7.96" fill="#b3ad2f"/><rect x="529.98" y="257.99" width="3.87" height="6.85" fill="#2fb32f"/><rect x="563.04" y="257.99" width="3.87" height="6.85" fill="#2fb32f"/><rect x="654.87" y="257.99" width="3.87" height="6.85" fill="#2fb32f"/><rect x="691.60" y="257.99" width="3.87" height="6.85" fill="#2fb32f"/><rect x="746.69" y="257.99" width="3.87" height="6.85" fill="#2fb32f"/><rect x="831.17" y="257.99" width="3.87" height="6.85" fill="#2fb32f"/><rect x="757.71" y="257.99" width="3.87" height="6.85" fill="#b5452f"/><rect x="812.81" y="257.99" width="3.87" height="6.85" fill="#b5452f"/><rect x="533.66" y="257.99" width="3.87" height="6.85" fill="#b3ad2f"/><rect x="581.41" y="257.99" width="3.87" height="6.85" fill="#b3ad2f"/><rect x="522.64" y="259.11" width="3.87" height="5.73" fill="#2fb32f"/><rect x="636.50" y="259.11" width="3.87" height="5.73" fill="#2fb32f"/><rect x="735.67" y="259.11" width="3.87" height="5.73" fill="#2fb32f"/><rect x="750.36" y="259.11" width="3.87" height="5.73" fill="#2fb32f"/><rect x="798.11" y="259.11" width="3.87" height="5.73" fill="#2fb32f"/><rect x="805.46" y="259.11" width="3.87" height="5.73" fill="#2fb32f"/><rect x="585.08" y="259.11" width="3.87" height="5.73" fill="#b5452f"/><rect x="526.31" y="260.22" width="3.87" height="4.62" fill="#2fb32f"/><rect x="548.35" y="260.22" width="3.87" height="4.62" fill="#2fb32f"/><rect x="570.39" y="260.22" width="7.55" height="4.62" fill="#2fb32f"/><rect x="926.67" y="260.22" width="3.87" height="4.62" fill="#2fb32f"/><rect x="713.63" y="260.22" width="3.87" height="4.62" fill="#b3ad2f"/><rect x="621.81" y="261.34" width="3.87" height="3.50" fill="#2fb32f"/><rect x="632.83" y="261.34" width="3.87" height="3.50" fill="#2fb32f"/><rect x="849.54" y="261.34" width="3.87" height="3.50" fill="#2fb32f"/><rect x="717.31" y="261.34" width="3.87" height="3.50" fill="#b5452f"/><rect x="724.65" y="261.34" width="3.87" height="3.50" fill="#b5452f"/><rect x="669.56" y="261.34" width="3.87" height="3.50" fill="#b3ad2f"/><rect x="801.79" y="261.34" width="3.87" height="3.50" fill="#b3ad2f"/><rect x="537.33" y="262.46" width="3.87" height="2.38" fill="#2fb32f"/><rect x="555.70" y="262.46" width="3.87" height="2.38" fill="#2fb32f"/><rect x="610.79" y="262.46" width="3.87" height="2.38" fill="#2fb32f"/><rect x="625.48" y="262.46" width="3.87" height="2.38" fill="#2fb32f"/><rect x="673.23" y="262.46" width="3.87" height="2.38" fill="#2fb32f"/><rect x="776.08" y="262.46" width="3.87" height="2.38" fill="#2fb32f"/><rect x="783.42" y="262.46" width="7.55" height="2.38" fill="#2fb32f"/><rect x="860.55" y="262.46" width="3.87" height="2.38" fill="#2fb32f"/><rect x="886.27" y="262.46" width="7.55" height="2.38" fill="#2fb32f"/><rect x="544.68" y="262.46" width="3.87" height="2.38" fill="#b3ad2f"/><rect x="662.21" y="262.46" width="3.87" height="2.38" fill="#b3ad2f"/><rect x="559.37" y="263.57" width="3.87" height="1.27" fill="#2fb32f"/><rect x="603.44" y="263.57" width="7.55" height="1.27" fill="#2fb32f"/><rect x="629.15" y="263.57" width="3.87" height="1.27" fill="#2fb32f"/><rect x="643.85" y="263.57" width="11.22" height="1.27" fill="#2fb32f"/><rect x="658.54" y="263.57" width="3.87" height="1.27" fill="#2fb32f"/><rect x="676.90" y="263.57" width="7.55" height="1.27" fill="#2fb32f"/><rect x="698.94" y="263.57" width="11.22" height="1.27" fill="#2fb32f"/><rect x="732.00" y="263.57" width="3.87" height="1.27" fill="#2fb32f"/><rect x="743.02" y="263.57" width="3.87" height="1.27" fill="#2fb32f"/><rect x="790.77" y="263.57" width="7.55" height="1.27" fill="#2fb32f"/><rect x="816.48" y="263.57" width="3.87" height="1.27" fill="#2fb32f"/><rect x="823.82" y="263.57" width="7.55" height="1.27" fill="#2fb32f"/><rect x="838.52" y="263.57" width="11.22" height="1.27" fill="#2fb32f"/><rect x="853.21" y="263.57" width="7.55" height="1.27" fill="#2fb32f"/><rect x="864.23" y="263.57" width="22.24" height="1.27" fill="#2fb32f"/><rect x="911.98" y="263.57" width="3.87" height="1.27" fill="#2fb32f"/><rect x="919.32" y="263.57" width="7.55" height="1.27" fill="#2fb32f"/><rect x="948.71" y="263.57" width="7.55" height="1.27" fill="#2fb32f"/><rect x="640.17" y="263.57" width="3.87" height="1.27" fill="#b3ad2f"/><rect x="665.88" y="263.57" width="3.87" height="1.27" fill="#b3ad2f"/><rect x="834.84" y="263.57" width="3.87" height="1.27" fill="#b3ad2f"/><rect x="502.05" y="258.06" width="0.85" height="4.0" fill="#b5452f"/><rect x="502.05" y="262.66" width="0.85" height="0.9" fill="#b5452f"/><rect x="505.72" y="258.06" width="0.85" height="4.0" fill="#b5452f"/><rect x="505.72" y="262.66" width="0.85" height="0.9" fill="#b5452f"/><rect x="898.73" y="258.06" width="0.85" height="4.0" fill="#b5452f"/><rect x="898.73" y="262.66" width="0.85" height="0.9" fill="#b5452f"/><rect x="902.41" y="258.06" width="0.85" height="4.0" fill="#b5452f"/><rect x="902.41" y="262.66" width="0.85" height="0.9" fill="#b5452f"/><rect x="522.64" y="264.69" width="3.87" height="1.27" fill="#b3ad2f"/><rect x="507.95" y="264.69" width="3.87" height="2.38" fill="#2fb32f"/><rect x="518.97" y="264.69" width="3.87" height="2.38" fill="#2fb32f"/><rect x="555.70" y="264.69" width="3.87" height="2.38" fill="#b3ad2f"/><rect x="529.98" y="264.69" width="3.87" height="4.62" fill="#b3ad2f"/><rect x="515.29" y="264.69" width="3.87" height="5.73" fill="#2fb32f"/><rect x="552.02" y="264.69" width="3.87" height="6.85" fill="#2fb32f"/><rect x="588.75" y="264.69" width="3.87" height="6.85" fill="#2fb32f"/><rect x="559.37" y="264.69" width="11.22" height="9.08" fill="#b5452f"/><rect x="500.60" y="265.81" width="3.87" height="7.96" fill="#2fb32f"/><rect x="511.62" y="265.81" width="3.87" height="7.96" fill="#2fb32f"/><rect x="544.68" y="265.81" width="3.87" height="7.96" fill="#2fb32f"/><rect x="522.64" y="265.81" width="3.87" height="7.96" fill="#b5452f"/><rect x="537.33" y="266.92" width="3.87" height="6.85" fill="#2fb32f"/><rect x="555.70" y="266.92" width="3.87" height="6.85" fill="#b5452f"/><rect x="507.95" y="266.92" width="3.87" height="6.85" fill="#b3ad2f"/><rect x="518.97" y="266.92" width="3.87" height="6.85" fill="#b3ad2f"/><rect x="504.27" y="268.04" width="3.87" height="5.73" fill="#2fb32f"/><rect x="548.35" y="268.04" width="3.87" height="5.73" fill="#2fb32f"/><rect x="592.43" y="268.04" width="3.87" height="5.73" fill="#2fb32f"/><rect x="541.00" y="269.15" width="3.87" height="4.62" fill="#2fb32f"/><rect x="529.98" y="269.15" width="3.87" height="4.62" fill="#b5452f"/><rect x="515.29" y="270.27" width="3.87" height="3.50" fill="#b3ad2f"/><rect x="585.08" y="271.39" width="3.87" height="2.38" fill="#2fb32f"/><rect x="596.10" y="271.39" width="3.87" height="2.38" fill="#2fb32f"/><rect x="552.02" y="271.39" width="3.87" height="2.38" fill="#b3ad2f"/><rect x="588.75" y="271.39" width="3.87" height="2.38" fill="#b3ad2f"/><rect x="526.31" y="272.50" width="3.87" height="1.27" fill="#2fb32f"/><rect x="533.66" y="272.50" width="3.87" height="1.27" fill="#2fb32f"/><rect x="570.39" y="272.50" width="14.89" height="1.27" fill="#2fb32f"/><rect x="599.77" y="272.50" width="11.22" height="1.27" fill="#2fb32f"/><rect x="612.24" y="266.99" width="0.85" height="4.0" fill="#b5452f"/><rect x="612.24" y="271.59" width="0.85" height="0.9" fill="#b5452f"/><rect x="522.64" y="479.01" width="3.87" height="1.27" fill="#2fb32f"/><rect x="720.98" y="479.01" width="3.87" height="1.27" fill="#2fb32f"/><rect x="809.13" y="479.01" width="3.87" height="1.27" fill="#2fb32f"/><rect x="816.48" y="479.01" width="3.87" height="1.27" fill="#2fb32f"/><rect x="937.69" y="479.01" width="14.89" height="1.27" fill="#2fb32f"/><rect x="603.44" y="479.01" width="3.87" height="1.27" fill="#b3ad2f"/><rect x="614.46" y="479.01" width="3.87" height="1.27" fill="#b3ad2f"/><rect x="728.33" y="479.01" width="3.87" height="1.27" fill="#b3ad2f"/><rect x="776.08" y="479.01" width="3.87" height="1.27" fill="#b3ad2f"/><rect x="823.82" y="479.01" width="3.87" height="1.27" fill="#b3ad2f"/><rect x="900.96" y="479.01" width="3.87" height="1.27" fill="#b3ad2f"/><rect x="511.62" y="479.01" width="7.55" height="2.38" fill="#2fb32f"/><rect x="596.10" y="479.01" width="3.87" height="2.38" fill="#2fb32f"/><rect x="687.92" y="479.01" width="3.87" height="2.38" fill="#2fb32f"/><rect x="717.31" y="479.01" width="3.87" height="2.38" fill="#2fb32f"/><rect x="765.06" y="479.01" width="3.87" height="2.38" fill="#2fb32f"/><rect x="820.15" y="479.01" width="3.87" height="2.38" fill="#2fb32f"/><rect x="934.01" y="479.01" width="3.87" height="2.38" fill="#2fb32f"/><rect x="526.31" y="479.01" width="3.87" height="2.38" fill="#b3ad2f"/><rect x="599.77" y="479.01" width="3.87" height="3.50" fill="#2fb32f"/><rect x="805.46" y="479.01" width="3.87" height="3.50" fill="#2fb32f"/><rect x="724.65" y="479.01" width="3.87" height="3.50" fill="#b3ad2f"/><rect x="812.81" y="479.01" width="3.87" height="3.50" fill="#b3ad2f"/><rect x="673.23" y="479.01" width="7.55" height="4.62" fill="#2fb32f"/><rect x="684.25" y="479.01" width="3.87" height="5.73" fill="#2fb32f"/><rect x="772.40" y="479.01" width="3.87" height="5.73" fill="#2fb32f"/><rect x="691.60" y="479.01" width="3.87" height="6.85" fill="#b3ad2f"/><rect x="570.39" y="479.01" width="3.87" height="9.08" fill="#2fb32f"/><rect x="592.43" y="479.01" width="3.87" height="9.08" fill="#2fb32f"/><rect x="713.63" y="479.01" width="3.87" height="9.08" fill="#2fb32f"/><rect x="768.73" y="479.01" width="3.87" height="9.08" fill="#2fb32f"/><rect x="801.79" y="479.01" width="3.87" height="9.08" fill="#2fb32f"/><rect x="930.34" y="479.01" width="3.87" height="9.08" fill="#2fb32f"/><rect x="533.66" y="479.01" width="3.87" height="9.08" fill="#b5452f"/><rect x="607.12" y="479.01" width="7.55" height="9.08" fill="#b5452f"/><rect x="636.50" y="479.01" width="18.57" height="9.08" fill="#b5452f"/><rect x="658.54" y="479.01" width="3.87" height="9.08" fill="#b5452f"/><rect x="669.56" y="479.01" width="3.87" height="9.08" fill="#b5452f"/><rect x="732.00" y="479.01" width="14.89" height="9.08" fill="#b5452f"/><rect x="750.36" y="479.01" width="3.87" height="9.08" fill="#b5452f"/><rect x="779.75" y="479.01" width="7.55" height="9.08" fill="#b5452f"/><rect x="790.77" y="479.01" width="3.87" height="9.08" fill="#b5452f"/><rect x="897.28" y="479.01" width="3.87" height="9.08" fill="#b5452f"/><rect x="904.63" y="479.01" width="7.55" height="9.08" fill="#b5452f"/><rect x="919.32" y="479.01" width="3.87" height="9.08" fill="#b5452f"/><rect x="952.38" y="479.01" width="7.55" height="9.08" fill="#b5452f"/><rect x="761.38" y="480.13" width="3.87" height="7.96" fill="#2fb32f"/><rect x="603.44" y="480.13" width="3.87" height="7.96" fill="#b5452f"/><rect x="614.46" y="480.13" width="3.87" height="7.96" fill="#b5452f"/><rect x="728.33" y="480.13" width="3.87" height="7.96" fill="#b5452f"/><rect x="776.08" y="480.13" width="3.87" height="7.96" fill="#b5452f"/><rect x="823.82" y="480.13" width="3.87" height="7.96" fill="#b5452f"/><rect x="900.96" y="480.13" width="3.87" height="7.96" fill="#b5452f"/><rect x="522.64" y="480.13" width="3.87" height="7.96" fill="#b3ad2f"/><rect x="720.98" y="480.13" width="3.87" height="7.96" fill="#b3ad2f"/><rect x="809.13" y="480.13" width="3.87" height="7.96" fill="#b3ad2f"/><rect x="816.48" y="480.13" width="3.87" height="7.96" fill="#b3ad2f"/><rect x="937.69" y="480.13" width="14.89" height="7.96" fill="#b3ad2f"/><rect x="566.71" y="481.24" width="3.87" height="6.85" fill="#2fb32f"/><rect x="680.58" y="481.24" width="3.87" height="6.85" fill="#2fb32f"/><rect x="526.31" y="481.24" width="3.87" height="6.85" fill="#b5452f"/><rect x="511.62" y="481.24" width="7.55" height="6.85" fill="#b3ad2f"/><rect x="596.10" y="481.24" width="3.87" height="6.85" fill="#b3ad2f"/><rect x="687.92" y="481.24" width="3.87" height="6.85" fill="#b3ad2f"/><rect x="717.31" y="481.24" width="3.87" height="6.85" fill="#b3ad2f"/><rect x="765.06" y="481.24" width="3.87" height="6.85" fill="#b3ad2f"/><rect x="820.15" y="481.24" width="3.87" height="6.85" fill="#b3ad2f"/><rect x="934.01" y="481.24" width="3.87" height="6.85" fill="#b3ad2f"/><rect x="588.75" y="482.36" width="3.87" height="5.73" fill="#2fb32f"/><rect x="665.88" y="482.36" width="3.87" height="5.73" fill="#2fb32f"/><rect x="757.71" y="482.36" width="3.87" height="5.73" fill="#2fb32f"/><rect x="798.11" y="482.36" width="3.87" height="5.73" fill="#2fb32f"/><rect x="724.65" y="482.36" width="3.87" height="5.73" fill="#b5452f"/><rect x="812.81" y="482.36" width="3.87" height="5.73" fill="#b5452f"/><rect x="599.77" y="482.36" width="3.87" height="5.73" fill="#b3ad2f"/><rect x="805.46" y="482.36" width="3.87" height="5.73" fill="#b3ad2f"/><rect x="923.00" y="483.47" width="7.55" height="4.62" fill="#2fb32f"/><rect x="673.23" y="483.47" width="7.55" height="4.62" fill="#b3ad2f"/><rect x="541.00" y="484.59" width="3.87" height="3.50" fill="#2fb32f"/><rect x="574.06" y="484.59" width="3.87" height="3.50" fill="#2fb32f"/><rect x="662.21" y="484.59" width="3.87" height="3.50" fill="#2fb32f"/><rect x="702.62" y="484.59" width="3.87" height="3.50" fill="#2fb32f"/><rect x="853.21" y="484.59" width="3.87" height="3.50" fill="#2fb32f"/><rect x="684.25" y="484.59" width="3.87" height="3.50" fill="#b3ad2f"/><rect x="772.40" y="484.59" width="3.87" height="3.50" fill="#b3ad2f"/><rect x="507.95" y="485.71" width="3.87" height="2.38" fill="#2fb32f"/><rect x="529.98" y="485.71" width="3.87" height="2.38" fill="#2fb32f"/><rect x="585.08" y="485.71" width="3.87" height="2.38" fill="#2fb32f"/><rect x="698.94" y="485.71" width="3.87" height="2.38" fill="#2fb32f"/><rect x="691.60" y="485.71" width="3.87" height="2.38" fill="#b5452f"/><rect x="518.97" y="486.82" width="3.87" height="1.27" fill="#2fb32f"/><rect x="537.33" y="486.82" width="3.87" height="1.27" fill="#2fb32f"/><rect x="544.68" y="486.82" width="22.24" height="1.27" fill="#2fb32f"/><rect x="577.73" y="486.82" width="7.55" height="1.27" fill="#2fb32f"/><rect x="618.14" y="486.82" width="18.57" height="1.27" fill="#2fb32f"/><rect x="654.87" y="486.82" width="3.87" height="1.27" fill="#2fb32f"/><rect x="695.27" y="486.82" width="3.87" height="1.27" fill="#2fb32f"/><rect x="706.29" y="486.82" width="7.55" height="1.27" fill="#2fb32f"/><rect x="746.69" y="486.82" width="3.87" height="1.27" fill="#2fb32f"/><rect x="754.04" y="486.82" width="3.87" height="1.27" fill="#2fb32f"/><rect x="787.09" y="486.82" width="3.87" height="1.27" fill="#2fb32f"/><rect x="794.44" y="486.82" width="3.87" height="1.27" fill="#2fb32f"/><rect x="827.50" y="486.82" width="25.91" height="1.27" fill="#2fb32f"/><rect x="856.88" y="486.82" width="40.60" height="1.27" fill="#2fb32f"/><rect x="911.98" y="486.82" width="7.55" height="1.27" fill="#2fb32f"/><rect x="959.73" y="486.82" width="3.87" height="1.27" fill="#2fb32f"/><rect x="502.05" y="481.31" width="0.85" height="4.0" fill="#b5452f"/><rect x="502.05" y="485.91" width="0.85" height="0.9" fill="#b5452f"/><rect x="505.72" y="481.31" width="0.85" height="4.0" fill="#b5452f"/><rect x="505.72" y="485.91" width="0.85" height="0.9" fill="#b5452f"/><rect x="529.98" y="487.94" width="3.87" height="1.27" fill="#2fb32f"/><rect x="614.46" y="487.94" width="3.87" height="1.27" fill="#2fb32f"/><rect x="787.09" y="487.94" width="3.87" height="1.27" fill="#2fb32f"/><rect x="838.52" y="487.94" width="3.87" height="1.27" fill="#2fb32f"/><rect x="882.59" y="487.94" width="3.87" height="1.27" fill="#2fb32f"/><rect x="717.31" y="487.94" width="3.87" height="1.27" fill="#b3ad2f"/><rect x="842.19" y="487.94" width="3.87" height="1.27" fill="#b3ad2f"/><rect x="559.37" y="487.94" width="3.87" height="2.38" fill="#2fb32f"/><rect x="754.04" y="487.94" width="3.87" height="2.38" fill="#2fb32f"/><rect x="713.63" y="487.94" width="3.87" height="2.38" fill="#b3ad2f"/><rect x="919.32" y="487.94" width="3.87" height="2.38" fill="#b3ad2f"/><rect x="563.04" y="487.94" width="3.87" height="3.50" fill="#2fb32f"/><rect x="621.81" y="487.94" width="3.87" height="3.50" fill="#2fb32f"/><rect x="665.88" y="487.94" width="3.87" height="3.50" fill="#2fb32f"/><rect x="695.27" y="487.94" width="3.87" height="3.50" fill="#2fb32f"/><rect x="709.96" y="487.94" width="3.87" height="3.50" fill="#2fb32f"/><rect x="566.71" y="487.94" width="3.87" height="3.50" fill="#b3ad2f"/><rect x="629.15" y="487.94" width="3.87" height="3.50" fill="#b3ad2f"/><rect x="757.71" y="487.94" width="3.87" height="3.50" fill="#b3ad2f"/><rect x="662.21" y="487.94" width="3.87" height="4.62" fill="#2fb32f"/><rect x="867.90" y="487.94" width="3.87" height="4.62" fill="#2fb32f"/><rect x="515.29" y="487.94" width="3.87" height="5.73" fill="#2fb32f"/><rect x="533.66" y="487.94" width="3.87" height="5.73" fill="#b3ad2f"/><rect x="698.94" y="487.94" width="3.87" height="6.85" fill="#2fb32f"/><rect x="746.69" y="487.94" width="3.87" height="6.85" fill="#2fb32f"/><rect x="798.11" y="487.94" width="3.87" height="6.85" fill="#2fb32f"/><rect x="908.30" y="487.94" width="3.87" height="6.85" fill="#2fb32f"/><rect x="625.48" y="487.94" width="3.87" height="6.85" fill="#b3ad2f"/><rect x="743.02" y="487.94" width="3.87" height="6.85" fill="#b3ad2f"/><rect x="911.98" y="487.94" width="3.87" height="7.96" fill="#2fb32f"/><rect x="658.54" y="487.94" width="3.87" height="7.96" fill="#b3ad2f"/><rect x="511.62" y="487.94" width="3.87" height="9.08" fill="#2fb32f"/><rect x="518.97" y="487.94" width="3.87" height="9.08" fill="#2fb32f"/><rect x="555.70" y="487.94" width="3.87" height="9.08" fill="#2fb32f"/><rect x="618.14" y="487.94" width="3.87" height="9.08" fill="#2fb32f"/><rect x="702.62" y="487.94" width="3.87" height="9.08" fill="#2fb32f"/><rect x="790.77" y="487.94" width="3.87" height="9.08" fill="#2fb32f"/><rect x="915.65" y="487.94" width="3.87" height="9.08" fill="#2fb32f"/><rect x="522.64" y="487.94" width="3.87" height="9.08" fill="#b5452f"/><rect x="552.02" y="487.94" width="3.87" height="9.08" fill="#b5452f"/><rect x="570.39" y="487.94" width="14.89" height="9.08" fill="#b5452f"/><rect x="588.75" y="487.94" width="3.87" height="9.08" fill="#b5452f"/><rect x="651.19" y="487.94" width="3.87" height="9.08" fill="#b5452f"/><rect x="669.56" y="487.94" width="7.55" height="9.08" fill="#b5452f"/><rect x="720.98" y="487.94" width="3.87" height="9.08" fill="#b5452f"/><rect x="750.36" y="487.94" width="3.87" height="9.08" fill="#b5452f"/><rect x="845.86" y="487.94" width="3.87" height="9.08" fill="#b5452f"/><rect x="856.88" y="487.94" width="3.87" height="9.08" fill="#b5452f"/><rect x="871.57" y="487.94" width="3.87" height="9.08" fill="#b5452f"/><rect x="923.00" y="487.94" width="11.22" height="9.08" fill="#b5452f"/><rect x="937.69" y="487.94" width="7.55" height="9.08" fill="#b5452f"/><rect x="794.44" y="489.06" width="3.87" height="7.96" fill="#2fb32f"/><rect x="834.84" y="489.06" width="3.87" height="7.96" fill="#2fb32f"/><rect x="717.31" y="489.06" width="3.87" height="7.96" fill="#b5452f"/><rect x="842.19" y="489.06" width="3.87" height="7.96" fill="#b5452f"/><rect x="529.98" y="489.06" width="3.87" height="7.96" fill="#b3ad2f"/><rect x="614.46" y="489.06" width="3.87" height="7.96" fill="#b3ad2f"/><rect x="787.09" y="489.06" width="3.87" height="7.96" fill="#b3ad2f"/><rect x="838.52" y="489.06" width="3.87" height="7.96" fill="#b3ad2f"/><rect x="882.59" y="489.06" width="3.87" height="7.96" fill="#b3ad2f"/><rect x="526.31" y="490.17" width="3.87" height="6.85" fill="#2fb32f"/><rect x="603.44" y="490.17" width="3.87" height="6.85" fill="#2fb32f"/><rect x="831.17" y="490.17" width="3.87" height="6.85" fill="#2fb32f"/><rect x="878.92" y="490.17" width="3.87" height="6.85" fill="#2fb32f"/><rect x="713.63" y="490.17" width="3.87" height="6.85" fill="#b5452f"/><rect x="919.32" y="490.17" width="3.87" height="6.85" fill="#b5452f"/><rect x="559.37" y="490.17" width="3.87" height="6.85" fill="#b3ad2f"/><rect x="754.04" y="490.17" width="3.87" height="6.85" fill="#b3ad2f"/><rect x="544.68" y="491.29" width="3.87" height="5.73" fill="#2fb32f"/><rect x="823.82" y="491.29" width="3.87" height="5.73" fill="#2fb32f"/><rect x="864.23" y="491.29" width="3.87" height="5.73" fill="#2fb32f"/><rect x="875.25" y="491.29" width="3.87" height="5.73" fill="#2fb32f"/><rect x="952.38" y="491.29" width="3.87" height="5.73" fill="#2fb32f"/><rect x="566.71" y="491.29" width="3.87" height="5.73" fill="#b5452f"/><rect x="629.15" y="491.29" width="3.87" height="5.73" fill="#b5452f"/><rect x="757.71" y="491.29" width="3.87" height="5.73" fill="#b5452f"/><rect x="563.04" y="491.29" width="3.87" height="5.73" fill="#b3ad2f"/><rect x="621.81" y="491.29" width="3.87" height="5.73" fill="#b3ad2f"/><rect x="665.88" y="491.29" width="3.87" height="5.73" fill="#b3ad2f"/><rect x="695.27" y="491.29" width="3.87" height="5.73" fill="#b3ad2f"/><rect x="709.96" y="491.29" width="3.87" height="5.73" fill="#b3ad2f"/><rect x="654.87" y="492.40" width="3.87" height="4.62" fill="#2fb32f"/><rect x="728.33" y="492.40" width="3.87" height="4.62" fill="#2fb32f"/><rect x="959.73" y="492.40" width="3.87" height="4.62" fill="#2fb32f"/><rect x="662.21" y="492.40" width="3.87" height="4.62" fill="#b3ad2f"/><rect x="867.90" y="492.40" width="3.87" height="4.62" fill="#b3ad2f"/><rect x="548.35" y="493.52" width="3.87" height="3.50" fill="#2fb32f"/><rect x="783.42" y="493.52" width="3.87" height="3.50" fill="#2fb32f"/><rect x="948.71" y="493.52" width="3.87" height="3.50" fill="#2fb32f"/><rect x="956.05" y="493.52" width="3.87" height="3.50" fill="#2fb32f"/><rect x="533.66" y="493.52" width="3.87" height="3.50" fill="#b5452f"/><rect x="515.29" y="493.52" width="3.87" height="3.50" fill="#b3ad2f"/><rect x="500.60" y="494.64" width="7.55" height="2.38" fill="#2fb32f"/><rect x="596.10" y="494.64" width="3.87" height="2.38" fill="#2fb32f"/><rect x="607.12" y="494.64" width="7.55" height="2.38" fill="#2fb32f"/><rect x="684.25" y="494.64" width="3.87" height="2.38" fill="#2fb32f"/><rect x="691.60" y="494.64" width="3.87" height="2.38" fill="#2fb32f"/><rect x="735.67" y="494.64" width="3.87" height="2.38" fill="#2fb32f"/><rect x="779.75" y="494.64" width="3.87" height="2.38" fill="#2fb32f"/><rect x="900.96" y="494.64" width="3.87" height="2.38" fill="#2fb32f"/><rect x="625.48" y="494.64" width="3.87" height="2.38" fill="#b5452f"/><rect x="743.02" y="494.64" width="3.87" height="2.38" fill="#b5452f"/><rect x="698.94" y="494.64" width="3.87" height="2.38" fill="#b3ad2f"/><rect x="746.69" y="494.64" width="3.87" height="2.38" fill="#b3ad2f"/><rect x="798.11" y="494.64" width="3.87" height="2.38" fill="#b3ad2f"/><rect x="908.30" y="494.64" width="3.87" height="2.38" fill="#b3ad2f"/><rect x="507.95" y="495.75" width="3.87" height="1.27" fill="#2fb32f"/><rect x="537.33" y="495.75" width="7.55" height="1.27" fill="#2fb32f"/><rect x="585.08" y="495.75" width="3.87" height="1.27" fill="#2fb32f"/><rect x="592.43" y="495.75" width="3.87" height="1.27" fill="#2fb32f"/><rect x="599.77" y="495.75" width="3.87" height="1.27" fill="#2fb32f"/><rect x="632.83" y="495.75" width="18.57" height="1.27" fill="#2fb32f"/><rect x="676.90" y="495.75" width="7.55" height="1.27" fill="#2fb32f"/><rect x="687.92" y="495.75" width="3.87" height="1.27" fill="#2fb32f"/><rect x="706.29" y="495.75" width="3.87" height="1.27" fill="#2fb32f"/><rect x="724.65" y="495.75" width="3.87" height="1.27" fill="#2fb32f"/><rect x="732.00" y="495.75" width="3.87" height="1.27" fill="#2fb32f"/><rect x="739.35" y="495.75" width="3.87" height="1.27" fill="#2fb32f"/><rect x="761.38" y="495.75" width="18.57" height="1.27" fill="#2fb32f"/><rect x="801.79" y="495.75" width="22.24" height="1.27" fill="#2fb32f"/><rect x="827.50" y="495.75" width="3.87" height="1.27" fill="#2fb32f"/><rect x="849.54" y="495.75" width="7.55" height="1.27" fill="#2fb32f"/><rect x="860.55" y="495.75" width="3.87" height="1.27" fill="#2fb32f"/><rect x="893.61" y="495.75" width="7.55" height="1.27" fill="#2fb32f"/><rect x="904.63" y="495.75" width="3.87" height="1.27" fill="#2fb32f"/><rect x="934.01" y="495.75" width="3.87" height="1.27" fill="#2fb32f"/><rect x="945.03" y="495.75" width="3.87" height="1.27" fill="#2fb32f"/><rect x="658.54" y="495.75" width="3.87" height="1.27" fill="#b5452f"/><rect x="911.98" y="495.75" width="3.87" height="1.27" fill="#b3ad2f"/><rect x="887.72" y="490.24" width="0.85" height="4.0" fill="#b5452f"/><rect x="887.72" y="494.84" width="0.85" height="0.9" fill="#b5452f"/><rect x="891.39" y="490.24" width="0.85" height="4.0" fill="#b5452f"/><rect x="891.39" y="494.84" width="0.85" height="0.9" fill="#b5452f"/><rect x="541.00" y="496.87" width="3.87" height="1.27" fill="#2fb32f"/><rect x="732.00" y="496.87" width="3.87" height="1.27" fill="#2fb32f"/><rect x="845.86" y="496.87" width="3.87" height="1.27" fill="#2fb32f"/><rect x="805.46" y="496.87" width="3.87" height="1.27" fill="#b3ad2f"/><rect x="537.33" y="496.87" width="3.87" height="2.38" fill="#2fb32f"/><rect x="588.75" y="496.87" width="3.87" height="2.38" fill="#2fb32f"/><rect x="632.83" y="496.87" width="3.87" height="2.38" fill="#2fb32f"/><rect x="801.79" y="496.87" width="3.87" height="2.38" fill="#2fb32f"/><rect x="842.19" y="496.87" width="3.87" height="2.38" fill="#2fb32f"/><rect x="856.88" y="496.87" width="3.87" height="2.38" fill="#2fb32f"/><rect x="897.28" y="496.87" width="3.87" height="2.38" fill="#2fb32f"/><rect x="860.55" y="496.87" width="3.87" height="2.38" fill="#b3ad2f"/><rect x="904.63" y="496.87" width="3.87" height="2.38" fill="#b3ad2f"/><rect x="662.21" y="496.87" width="3.87" height="3.50" fill="#2fb32f"/><rect x="684.25" y="496.87" width="3.87" height="3.50" fill="#2fb32f"/><rect x="768.73" y="496.87" width="3.87" height="3.50" fill="#b3ad2f"/><rect x="533.66" y="496.87" width="3.87" height="4.62" fill="#2fb32f"/><rect x="720.98" y="496.87" width="3.87" height="4.62" fill="#2fb32f"/><rect x="937.69" y="496.87" width="3.87" height="4.62" fill="#2fb32f"/><rect x="629.15" y="496.87" width="3.87" height="4.62" fill="#b3ad2f"/><rect x="853.21" y="496.87" width="3.87" height="5.73" fill="#2fb32f"/><rect x="882.59" y="496.87" width="3.87" height="5.73" fill="#2fb32f"/><rect x="900.96" y="496.87" width="3.87" height="5.73" fill="#b3ad2f"/><rect x="625.48" y="496.87" width="3.87" height="6.85" fill="#b3ad2f"/><rect x="680.58" y="496.87" width="3.87" height="6.85" fill="#b3ad2f"/><rect x="577.73" y="496.87" width="3.87" height="9.08" fill="#2fb32f"/><rect x="717.31" y="496.87" width="3.87" height="9.08" fill="#2fb32f"/><rect x="889.94" y="496.87" width="7.55" height="9.08" fill="#2fb32f"/><rect x="934.01" y="496.87" width="3.87" height="9.08" fill="#2fb32f"/><rect x="507.95" y="496.87" width="7.55" height="9.08" fill="#b5452f"/><rect x="518.97" y="496.87" width="3.87" height="9.08" fill="#b5452f"/><rect x="548.35" y="496.87" width="11.22" height="9.08" fill="#b5452f"/><rect x="574.06" y="496.87" width="3.87" height="9.08" fill="#b5452f"/><rect x="592.43" y="496.87" width="11.22" height="9.08" fill="#b5452f"/><rect x="636.50" y="496.87" width="14.89" height="9.08" fill="#b5452f"/><rect x="687.92" y="496.87" width="3.87" height="9.08" fill="#b5452f"/><rect x="772.40" y="496.87" width="7.55" height="9.08" fill="#b5452f"/><rect x="783.42" y="496.87" width="3.87" height="9.08" fill="#b5452f"/><rect x="809.13" y="496.87" width="14.89" height="9.08" fill="#b5452f"/><rect x="849.54" y="496.87" width="3.87" height="9.08" fill="#b5452f"/><rect x="864.23" y="496.87" width="3.87" height="9.08" fill="#b5452f"/><rect x="621.81" y="497.99" width="3.87" height="7.96" fill="#2fb32f"/><rect x="658.54" y="497.99" width="3.87" height="7.96" fill="#2fb32f"/><rect x="805.46" y="497.99" width="3.87" height="7.96" fill="#b5452f"/><rect x="541.00" y="497.99" width="3.87" height="7.96" fill="#b3ad2f"/><rect x="732.00" y="497.99" width="3.87" height="7.96" fill="#b3ad2f"/><rect x="845.86" y="497.99" width="3.87" height="7.96" fill="#b3ad2f"/><rect x="585.08" y="499.10" width="3.87" height="6.85" fill="#2fb32f"/><rect x="794.44" y="499.10" width="7.55" height="6.85" fill="#2fb32f"/><rect x="926.67" y="499.10" width="3.87" height="6.85" fill="#2fb32f"/><rect x="860.55" y="499.10" width="3.87" height="6.85" fill="#b5452f"/><rect x="904.63" y="499.10" width="3.87" height="6.85" fill="#b5452f"/><rect x="537.33" y="499.10" width="3.87" height="6.85" fill="#b3ad2f"/><rect x="588.75" y="499.10" width="3.87" height="6.85" fill="#b3ad2f"/><rect x="632.83" y="499.10" width="3.87" height="6.85" fill="#b3ad2f"/><rect x="801.79" y="499.10" width="3.87" height="6.85" fill="#b3ad2f"/><rect x="842.19" y="499.10" width="3.87" height="6.85" fill="#b3ad2f"/><rect x="856.88" y="499.10" width="3.87" height="6.85" fill="#b3ad2f"/><rect x="897.28" y="499.10" width="3.87" height="6.85" fill="#b3ad2f"/><rect x="504.27" y="500.22" width="3.87" height="5.73" fill="#2fb32f"/><rect x="570.39" y="500.22" width="3.87" height="5.73" fill="#2fb32f"/><rect x="713.63" y="500.22" width="3.87" height="5.73" fill="#2fb32f"/><rect x="768.73" y="500.22" width="3.87" height="5.73" fill="#b5452f"/><rect x="662.21" y="500.22" width="3.87" height="5.73" fill="#b3ad2f"/><rect x="684.25" y="500.22" width="3.87" height="5.73" fill="#b3ad2f"/><rect x="529.98" y="501.33" width="3.87" height="4.62" fill="#2fb32f"/><rect x="827.50" y="501.33" width="3.87" height="4.62" fill="#2fb32f"/><rect x="886.27" y="501.33" width="3.87" height="4.62" fill="#2fb32f"/><rect x="629.15" y="501.33" width="3.87" height="4.62" fill="#b5452f"/><rect x="533.66" y="501.33" width="3.87" height="4.62" fill="#b3ad2f"/><rect x="720.98" y="501.33" width="3.87" height="4.62" fill="#b3ad2f"/><rect x="937.69" y="501.33" width="3.87" height="4.62" fill="#b3ad2f"/><rect x="500.60" y="502.45" width="3.87" height="3.50" fill="#2fb32f"/><rect x="900.96" y="502.45" width="3.87" height="3.50" fill="#b5452f"/><rect x="853.21" y="502.45" width="3.87" height="3.50" fill="#b3ad2f"/><rect x="882.59" y="502.45" width="3.87" height="3.50" fill="#b3ad2f"/><rect x="526.31" y="503.57" width="3.87" height="2.38" fill="#2fb32f"/><rect x="607.12" y="503.57" width="11.22" height="2.38" fill="#2fb32f"/><rect x="728.33" y="503.57" width="3.87" height="2.38" fill="#2fb32f"/><rect x="735.67" y="503.57" width="3.87" height="2.38" fill="#2fb32f"/><rect x="750.36" y="503.57" width="3.87" height="2.38" fill="#2fb32f"/><rect x="790.77" y="503.57" width="3.87" height="2.38" fill="#2fb32f"/><rect x="838.52" y="503.57" width="3.87" height="2.38" fill="#2fb32f"/><rect x="625.48" y="503.57" width="3.87" height="2.38" fill="#b5452f"/><rect x="680.58" y="503.57" width="3.87" height="2.38" fill="#b5452f"/><rect x="515.29" y="504.68" width="3.87" height="1.27" fill="#2fb32f"/><rect x="522.64" y="504.68" width="3.87" height="1.27" fill="#2fb32f"/><rect x="559.37" y="504.68" width="11.22" height="1.27" fill="#2fb32f"/><rect x="581.41" y="504.68" width="3.87" height="1.27" fill="#2fb32f"/><rect x="603.44" y="504.68" width="3.87" height="1.27" fill="#2fb32f"/><rect x="618.14" y="504.68" width="3.87" height="1.27" fill="#2fb32f"/><rect x="651.19" y="504.68" width="7.55" height="1.27" fill="#2fb32f"/><rect x="665.88" y="504.68" width="14.89" height="1.27" fill="#2fb32f"/><rect x="691.60" y="504.68" width="22.24" height="1.27" fill="#2fb32f"/><rect x="724.65" y="504.68" width="3.87" height="1.27" fill="#2fb32f"/><rect x="739.35" y="504.68" width="11.22" height="1.27" fill="#2fb32f"/><rect x="754.04" y="504.68" width="14.89" height="1.27" fill="#2fb32f"/><rect x="779.75" y="504.68" width="3.87" height="1.27" fill="#2fb32f"/><rect x="787.09" y="504.68" width="3.87" height="1.27" fill="#2fb32f"/><rect x="823.82" y="504.68" width="3.87" height="1.27" fill="#2fb32f"/><rect x="831.17" y="504.68" width="7.55" height="1.27" fill="#2fb32f"/><rect x="867.90" y="504.68" width="14.89" height="1.27" fill="#2fb32f"/><rect x="908.30" y="504.68" width="18.57" height="1.27" fill="#2fb32f"/><rect x="930.34" y="504.68" width="3.87" height="1.27" fill="#2fb32f"/><rect x="941.36" y="504.68" width="22.24" height="1.27" fill="#2fb32f"/><rect x="546.13" y="499.17" width="0.85" height="4.0" fill="#b5452f"/><rect x="546.13" y="503.77" width="0.85" height="0.9" fill="#b5452f"/><rect x="515.29" y="505.80" width="3.87" height="2.38" fill="#2fb32f"/><rect x="658.54" y="505.80" width="3.87" height="2.38" fill="#2fb32f"/><rect x="702.62" y="505.80" width="3.87" height="2.38" fill="#2fb32f"/><rect x="853.21" y="505.80" width="3.87" height="2.38" fill="#2fb32f"/><rect x="956.05" y="505.80" width="3.87" height="2.38" fill="#2fb32f"/><rect x="662.21" y="505.80" width="3.87" height="2.38" fill="#b3ad2f"/><rect x="812.81" y="505.80" width="3.87" height="2.38" fill="#b3ad2f"/><rect x="518.97" y="505.80" width="3.87" height="3.50" fill="#2fb32f"/><rect x="563.04" y="505.80" width="3.87" height="3.50" fill="#2fb32f"/><rect x="809.13" y="505.80" width="3.87" height="3.50" fill="#b3ad2f"/><rect x="842.19" y="505.80" width="3.87" height="4.62" fill="#2fb32f"/><rect x="816.48" y="505.80" width="3.87" height="4.62" fill="#b3ad2f"/><rect x="559.37" y="505.80" width="3.87" height="5.73" fill="#2fb32f"/><rect x="684.25" y="505.80" width="3.87" height="5.73" fill="#2fb32f"/><rect x="761.38" y="505.80" width="3.87" height="5.73" fill="#2fb32f"/><rect x="599.77" y="505.80" width="3.87" height="5.73" fill="#b3ad2f"/><rect x="698.94" y="505.80" width="3.87" height="5.73" fill="#b3ad2f"/><rect x="805.46" y="505.80" width="3.87" height="5.73" fill="#b3ad2f"/><rect x="952.38" y="505.80" width="3.87" height="5.73" fill="#b3ad2f"/><rect x="596.10" y="505.80" width="3.87" height="7.96" fill="#2fb32f"/><rect x="548.35" y="505.80" width="3.87" height="9.08" fill="#2fb32f"/><rect x="647.52" y="505.80" width="3.87" height="9.08" fill="#2fb32f"/><rect x="680.58" y="505.80" width="3.87" height="9.08" fill="#2fb32f"/><rect x="687.92" y="505.80" width="7.55" height="9.08" fill="#2fb32f"/><rect x="908.30" y="505.80" width="3.87" height="9.08" fill="#2fb32f"/><rect x="522.64" y="505.80" width="14.89" height="9.08" fill="#b5452f"/><rect x="541.00" y="505.80" width="3.87" height="9.08" fill="#b5452f"/><rect x="552.02" y="505.80" width="3.87" height="9.08" fill="#b5452f"/><rect x="566.71" y="505.80" width="18.57" height="9.08" fill="#b5452f"/><rect x="665.88" y="505.80" width="7.55" height="9.08" fill="#b5452f"/><rect x="706.29" y="505.80" width="3.87" height="9.08" fill="#b5452f"/><rect x="713.63" y="505.80" width="3.87" height="9.08" fill="#b5452f"/><rect x="820.15" y="505.80" width="7.55" height="9.08" fill="#b5452f"/><rect x="831.17" y="505.80" width="3.87" height="9.08" fill="#b5452f"/><rect x="856.88" y="505.80" width="11.22" height="9.08" fill="#b5452f"/><rect x="618.14" y="505.80" width="3.87" height="9.08" fill="#b3ad2f"/><rect x="673.23" y="506.92" width="7.55" height="7.96" fill="#2fb32f"/><rect x="544.68" y="508.03" width="3.87" height="6.85" fill="#2fb32f"/><rect x="732.00" y="508.03" width="3.87" height="6.85" fill="#2fb32f"/><rect x="834.84" y="508.03" width="3.87" height="6.85" fill="#2fb32f"/><rect x="662.21" y="508.03" width="3.87" height="6.85" fill="#b5452f"/><rect x="812.81" y="508.03" width="3.87" height="6.85" fill="#b5452f"/><rect x="515.29" y="508.03" width="3.87" height="6.85" fill="#b3ad2f"/><rect x="658.54" y="508.03" width="3.87" height="6.85" fill="#b3ad2f"/><rect x="702.62" y="508.03" width="3.87" height="6.85" fill="#b3ad2f"/><rect x="853.21" y="508.03" width="3.87" height="6.85" fill="#b3ad2f"/><rect x="956.05" y="508.03" width="3.87" height="6.85" fill="#b3ad2f"/><rect x="511.62" y="509.15" width="3.87" height="5.73" fill="#2fb32f"/><rect x="757.71" y="509.15" width="3.87" height="5.73" fill="#2fb32f"/><rect x="849.54" y="509.15" width="3.87" height="5.73" fill="#2fb32f"/><rect x="904.63" y="509.15" width="3.87" height="5.73" fill="#2fb32f"/><rect x="809.13" y="509.15" width="3.87" height="5.73" fill="#b5452f"/><rect x="518.97" y="509.15" width="3.87" height="5.73" fill="#b3ad2f"/><rect x="563.04" y="509.15" width="3.87" height="5.73" fill="#b3ad2f"/><rect x="592.43" y="510.26" width="3.87" height="4.62" fill="#2fb32f"/><rect x="614.46" y="510.26" width="3.87" height="4.62" fill="#2fb32f"/><rect x="709.96" y="510.26" width="3.87" height="4.62" fill="#2fb32f"/><rect x="838.52" y="510.26" width="3.87" height="4.62" fill="#2fb32f"/><rect x="900.96" y="510.26" width="3.87" height="4.62" fill="#2fb32f"/><rect x="816.48" y="510.26" width="3.87" height="4.62" fill="#b5452f"/><rect x="842.19" y="510.26" width="3.87" height="4.62" fill="#b3ad2f"/><rect x="507.95" y="511.38" width="3.87" height="3.50" fill="#2fb32f"/><rect x="632.83" y="511.38" width="3.87" height="3.50" fill="#2fb32f"/><rect x="654.87" y="511.38" width="3.87" height="3.50" fill="#2fb32f"/><rect x="911.98" y="511.38" width="7.55" height="3.50" fill="#2fb32f"/><rect x="599.77" y="511.38" width="3.87" height="3.50" fill="#b5452f"/><rect x="698.94" y="511.38" width="3.87" height="3.50" fill="#b5452f"/><rect x="805.46" y="511.38" width="3.87" height="3.50" fill="#b5452f"/><rect x="952.38" y="511.38" width="3.87" height="3.50" fill="#b5452f"/><rect x="559.37" y="511.38" width="3.87" height="3.50" fill="#b3ad2f"/><rect x="684.25" y="511.38" width="3.87" height="3.50" fill="#b3ad2f"/><rect x="761.38" y="511.38" width="3.87" height="3.50" fill="#b3ad2f"/><rect x="636.50" y="512.50" width="3.87" height="2.38" fill="#2fb32f"/><rect x="695.27" y="512.50" width="3.87" height="2.38" fill="#2fb32f"/><rect x="728.33" y="512.50" width="3.87" height="2.38" fill="#2fb32f"/><rect x="754.04" y="512.50" width="3.87" height="2.38" fill="#2fb32f"/><rect x="827.50" y="512.50" width="3.87" height="2.38" fill="#2fb32f"/><rect x="930.34" y="512.50" width="3.87" height="2.38" fill="#2fb32f"/><rect x="945.03" y="512.50" width="3.87" height="2.38" fill="#2fb32f"/><rect x="959.73" y="512.50" width="3.87" height="2.38" fill="#2fb32f"/><rect x="500.60" y="513.61" width="7.55" height="1.27" fill="#2fb32f"/><rect x="537.33" y="513.61" width="3.87" height="1.27" fill="#2fb32f"/><rect x="555.70" y="513.61" width="3.87" height="1.27" fill="#2fb32f"/><rect x="585.08" y="513.61" width="7.55" height="1.27" fill="#2fb32f"/><rect x="603.44" y="513.61" width="11.22" height="1.27" fill="#2fb32f"/><rect x="621.81" y="513.61" width="11.22" height="1.27" fill="#2fb32f"/><rect x="640.17" y="513.61" width="7.55" height="1.27" fill="#2fb32f"/><rect x="651.19" y="513.61" width="3.87" height="1.27" fill="#2fb32f"/><rect x="717.31" y="513.61" width="11.22" height="1.27" fill="#2fb32f"/><rect x="735.67" y="513.61" width="18.57" height="1.27" fill="#2fb32f"/><rect x="765.06" y="513.61" width="36.93" height="1.27" fill="#2fb32f"/><rect x="845.86" y="513.61" width="3.87" height="1.27" fill="#2fb32f"/><rect x="867.90" y="513.61" width="33.26" height="1.27" fill="#2fb32f"/><rect x="919.32" y="513.61" width="11.22" height="1.27" fill="#2fb32f"/><rect x="934.01" y="513.61" width="11.22" height="1.27" fill="#2fb32f"/><rect x="948.71" y="513.61" width="3.87" height="1.27" fill="#2fb32f"/><rect x="596.10" y="513.61" width="3.87" height="1.27" fill="#b3ad2f"/><rect x="803.24" y="508.10" width="0.85" height="4.0" fill="#b5452f"/><rect x="803.24" y="512.70" width="0.85" height="0.9" fill="#b5452f"/><rect x="552.02" y="514.73" width="3.87" height="1.27" fill="#2fb32f"/><rect x="889.94" y="514.73" width="3.87" height="1.27" fill="#2fb32f"/><rect x="548.35" y="514.73" width="3.87" height="2.38" fill="#2fb32f"/><rect x="695.27" y="514.73" width="3.87" height="2.38" fill="#2fb32f"/><rect x="798.11" y="514.73" width="3.87" height="2.38" fill="#2fb32f"/><rect x="544.68" y="514.73" width="3.87" height="3.50" fill="#2fb32f"/><rect x="588.75" y="514.73" width="3.87" height="4.62" fill="#2fb32f"/><rect x="746.69" y="514.73" width="3.87" height="6.85" fill="#2fb32f"/><rect x="787.09" y="514.73" width="11.22" height="6.85" fill="#2fb32f"/><rect x="739.35" y="514.73" width="3.87" height="7.96" fill="#2fb32f"/><rect x="842.19" y="514.73" width="7.55" height="7.96" fill="#2fb32f"/><rect x="893.61" y="514.73" width="3.87" height="7.96" fill="#2fb32f"/><rect x="735.67" y="514.73" width="3.87" height="7.96" fill="#b3ad2f"/><rect x="937.69" y="514.73" width="3.87" height="7.96" fill="#b3ad2f"/><rect x="500.60" y="514.73" width="3.87" height="9.08" fill="#2fb32f"/><rect x="691.60" y="514.73" width="3.87" height="9.08" fill="#2fb32f"/><rect x="743.02" y="515.85" width="3.87" height="7.96" fill="#2fb32f"/><rect x="552.02" y="515.85" width="3.87" height="7.96" fill="#b3ad2f"/><rect x="889.94" y="515.85" width="3.87" height="7.96" fill="#b3ad2f"/><rect x="599.77" y="516.96" width="3.87" height="6.85" fill="#2fb32f"/><rect x="651.19" y="516.96" width="3.87" height="6.85" fill="#2fb32f"/><rect x="548.35" y="516.96" width="3.87" height="6.85" fill="#b3ad2f"/><rect x="695.27" y="516.96" width="3.87" height="6.85" fill="#b3ad2f"/><rect x="798.11" y="516.96" width="3.87" height="6.85" fill="#b3ad2f"/><rect x="592.43" y="518.08" width="3.87" height="5.73" fill="#2fb32f"/><rect x="544.68" y="518.08" width="3.87" height="5.73" fill="#b3ad2f"/><rect x="541.00" y="519.20" width="3.87" height="4.62" fill="#2fb32f"/><rect x="934.01" y="519.20" width="3.87" height="4.62" fill="#2fb32f"/><rect x="945.03" y="519.20" width="3.87" height="4.62" fill="#2fb32f"/><rect x="588.75" y="519.20" width="3.87" height="4.62" fill="#b3ad2f"/><rect x="596.10" y="520.31" width="3.87" height="3.50" fill="#2fb32f"/><rect x="941.36" y="520.31" width="3.87" height="3.50" fill="#2fb32f"/><rect x="563.04" y="521.43" width="3.87" height="2.38" fill="#2fb32f"/><rect x="618.14" y="521.43" width="3.87" height="2.38" fill="#2fb32f"/><rect x="647.52" y="521.43" width="3.87" height="2.38" fill="#2fb32f"/><rect x="676.90" y="521.43" width="3.87" height="2.38" fill="#2fb32f"/><rect x="838.52" y="521.43" width="3.87" height="2.38" fill="#2fb32f"/><rect x="948.71" y="521.43" width="3.87" height="2.38" fill="#2fb32f"/><rect x="746.69" y="521.43" width="3.87" height="2.38" fill="#b3ad2f"/><rect x="787.09" y="521.43" width="11.22" height="2.38" fill="#b3ad2f"/><rect x="504.27" y="522.54" width="36.93" height="1.27" fill="#2fb32f"/><rect x="555.70" y="522.54" width="7.55" height="1.27" fill="#2fb32f"/><rect x="566.71" y="522.54" width="22.24" height="1.27" fill="#2fb32f"/><rect x="603.44" y="522.54" width="14.89" height="1.27" fill="#2fb32f"/><rect x="621.81" y="522.54" width="25.91" height="1.27" fill="#2fb32f"/><rect x="654.87" y="522.54" width="22.24" height="1.27" fill="#2fb32f"/><rect x="680.58" y="522.54" width="11.22" height="1.27" fill="#2fb32f"/><rect x="698.94" y="522.54" width="36.93" height="1.27" fill="#2fb32f"/><rect x="750.36" y="522.54" width="36.93" height="1.27" fill="#2fb32f"/><rect x="801.79" y="522.54" width="36.93" height="1.27" fill="#2fb32f"/><rect x="849.54" y="522.54" width="40.60" height="1.27" fill="#2fb32f"/><rect x="897.28" y="522.54" width="36.93" height="1.27" fill="#2fb32f"/><rect x="952.38" y="522.54" width="11.22" height="1.27" fill="#2fb32f"/><rect x="735.67" y="522.54" width="3.87" height="1.27" fill="#b5452f"/><rect x="937.69" y="522.54" width="3.87" height="1.27" fill="#b5452f"/><rect x="739.35" y="522.54" width="3.87" height="1.27" fill="#b3ad2f"/><rect x="842.19" y="522.54" width="7.55" height="1.27" fill="#b3ad2f"/><rect x="893.61" y="522.54" width="3.87" height="1.27" fill="#b3ad2f"/><rect x="500.60" y="531.47" width="3.87" height="1.27" fill="#2fb32f"/><rect x="505.72" y="525.96" width="0.85" height="4.0" fill="#b5452f"/><rect x="505.72" y="530.56" width="0.85" height="0.9" fill="#b5452f"/><rect x="509.40" y="525.96" width="0.85" height="4.0" fill="#b5452f"/><rect x="509.40" y="530.56" width="0.85" height="0.9" fill="#b5452f"/><rect x="559.37" y="559.38" width="3.87" height="2.38" fill="#2fb32f"/><rect x="555.70" y="559.38" width="3.87" height="4.62" fill="#2fb32f"/><rect x="515.29" y="559.38" width="3.87" height="9.08" fill="#b5452f"/><rect x="563.04" y="559.38" width="3.87" height="9.08" fill="#b3ad2f"/><rect x="511.62" y="560.50" width="3.87" height="7.96" fill="#2fb32f"/><rect x="559.37" y="561.61" width="3.87" height="6.85" fill="#b3ad2f"/><rect x="555.70" y="563.85" width="3.87" height="4.62" fill="#b3ad2f"/><rect x="518.97" y="567.19" width="36.93" height="1.27" fill="#2fb32f"/><rect x="566.71" y="567.19" width="3.87" height="1.27" fill="#2fb32f"/><rect x="502.05" y="561.68" width="0.85" height="4.0" fill="#b5452f"/><rect x="502.05" y="566.28" width="0.85" height="0.9" fill="#b5452f"/><rect x="505.72" y="561.68" width="0.85" height="4.0" fill="#b5452f"/><rect x="505.72" y="566.28" width="0.85" height="0.9" fill="#b5452f"/><rect x="509.40" y="561.68" width="0.85" height="4.0" fill="#b5452f"/><rect x="509.40" y="566.28" width="0.85" height="0.9" fill="#b5452f"/><rect x="570.74" y="559.73" width="2.973" height="8.23" fill="none" stroke="#b8b8b8" stroke-width="0.7"/></svg></div></body></html>
